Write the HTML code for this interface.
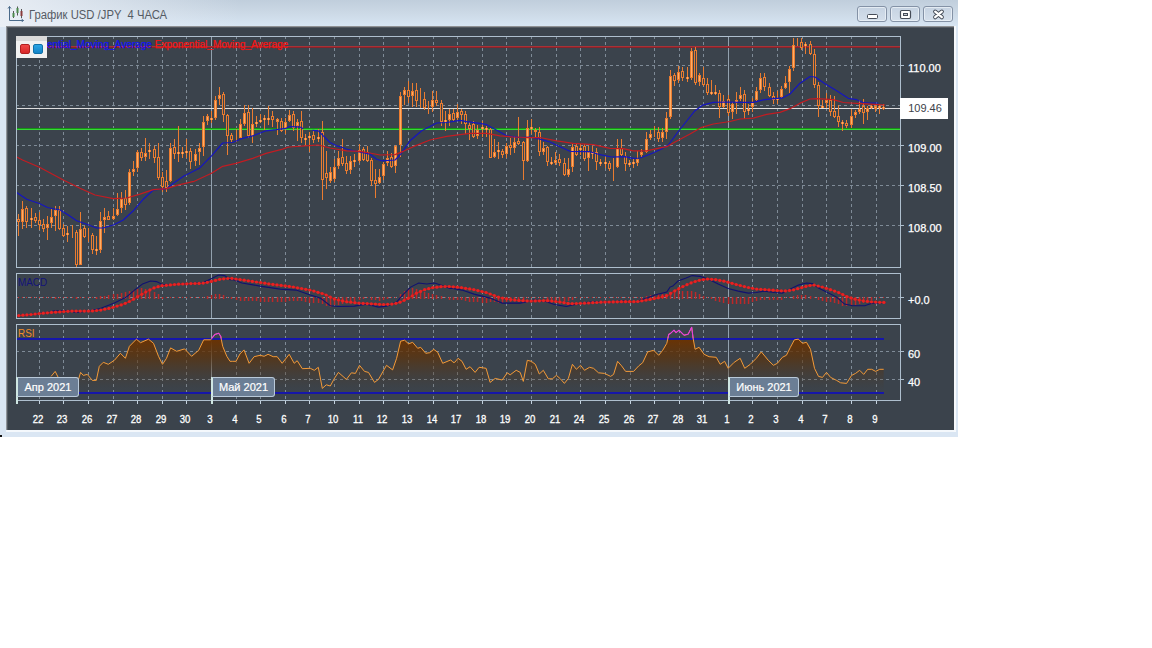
<!DOCTYPE html><html><head><meta charset="utf-8"><title>График USD/JPY</title>
<style>
html,body{margin:0;padding:0;background:#fff;}
body{width:1152px;height:648px;position:relative;overflow:hidden;font-family:"Liberation Sans",sans-serif;}
#win{position:absolute;left:0;top:0;width:958px;height:437px;background:#dae6f3;}
#tb{position:absolute;left:0;top:0;width:958px;height:27px;background:linear-gradient(90deg,rgba(236,240,246,0.9) 0px,rgba(234,239,246,0.7) 60px,rgba(230,237,245,0) 240px),linear-gradient(180deg,#c0cedc 0px,#cbd8e5 12px,#d6e4f2 25px,#dae8f4 27px);}
#inner{position:absolute;left:6px;top:26px;width:948px;height:404px;background:#3b434c;border-top:1px solid #8f9194;border-left:1px solid #8f9499;box-shadow:inset 1px 1px 0 #545a62;box-sizing:border-box;}
#hl{position:absolute;left:6px;top:430px;width:950px;height:2px;background:#f4f8fc}
#hr{position:absolute;left:954px;top:26px;width:2px;height:406px;background:#f6f9fc}
#title{position:absolute;left:28.5px;top:6.8px;font-size:12px;line-height:16px;color:#555b64;white-space:pre;transform:scaleX(0.94);transform-origin:0 0;}
.btn{position:absolute;top:6px;height:14px;border:1px solid #8492a6;border-radius:3px;background:linear-gradient(180deg,#c6d3e2,#d4dfeb);box-shadow:inset 0 0 0 1px rgba(235,241,248,0.8);box-sizing:content-box;}
.ax{position:absolute;left:908px;font-size:11px;line-height:12px;color:#fff;-webkit-text-stroke:0.25px #fff;}
.xl{position:absolute;top:413px;width:30px;text-align:center;font-size:11px;line-height:13px;color:#fff;-webkit-text-stroke:0.3px #fff;transform:scaleX(0.87);}
.mon{position:absolute;top:377px;height:18px;border:1px solid #b9c9d9;border-left:2px solid #cfe6e2;border-radius:0 3px 3px 0;background:#6b7e95;color:#fff;font-size:11px;line-height:18px;text-align:center;box-sizing:content-box;-webkit-text-stroke:0.2px #fff;}
.mont{position:absolute;top:377px;width:2px;height:27px;background:#cfe6e2}
.lg{position:absolute;top:37px;font-size:10.07px;line-height:12px;white-space:pre;-webkit-text-stroke-width:0.25px;}
</style></head><body>
<div id="win"><div id="tb"></div>
<svg style="position:absolute;left:6px;top:4px" width="20" height="18" viewBox="0 0 20 18"><path d="M3.5 2.5V16.5H17.5" fill="none" stroke="#4a6a8a" stroke-width="1"/><path d="M2 4.5L3.5 2.5L5 4.5M15.5 15L17.5 16.5L15.5 18" fill="none" stroke="#4a6a8a" stroke-width="1"/><path d="M7.5 7v7M11.5 2.5v9M15.5 5v9" stroke="#555" stroke-width="1"/><rect x="6.5" y="9" width="2" height="4" fill="#4d8a4d"/><rect x="10.5" y="4" width="2" height="5" fill="#4d8a4d"/><rect x="14.5" y="7" width="2" height="5" fill="#8a3d3d"/></svg>
<div id="title">График USD /JPY  4 ЧАСА</div>
<div class="btn" style="left:857px;width:28px"><svg width="28" height="14"><rect x="9.5" y="7.5" width="10" height="4" rx="1" fill="#fff" stroke="#454c58" stroke-width="1"/></svg></div>
<div class="btn" style="left:890px;width:28px"><svg width="28" height="14"><rect x="9.5" y="3.5" width="10" height="8" rx="1.2" fill="#fff" stroke="#454c58" stroke-width="1.2"/><rect x="12.5" y="6.5" width="4" height="2" fill="#c8ccd4" stroke="#454c58" stroke-width="1"/></svg></div>
<div class="btn" style="left:923px;width:28px"><svg width="28" height="14"><path d="M11.2 4.7L17.8 10.2M17.8 4.7L11.2 10.2" stroke="#454c58" stroke-width="4.2" stroke-linecap="round"/><path d="M11.2 4.7L17.8 10.2M17.8 4.7L11.2 10.2" stroke="#fff" stroke-width="2.3" stroke-linecap="round"/></svg></div>
<div id="inner"></div><div id="hl"></div><div id="hr"></div>
<svg width="958" height="437" viewBox="0 0 958 437" style="position:absolute;left:0;top:0">
<defs>
<linearGradient id="rsig" gradientUnits="userSpaceOnUse" x1="0" y1="339" x2="0" y2="392"><stop offset="0" stop-color="#6a3304" stop-opacity="1"/><stop offset="0.35" stop-color="#5e3208" stop-opacity="0.7"/><stop offset="0.7" stop-color="#523518" stop-opacity="0.3"/><stop offset="1" stop-color="#4a3a28" stop-opacity="0"/></linearGradient>
<clipPath id="cpm"><rect x="17" y="37" width="883" height="230"/></clipPath>
<clipPath id="cpr"><rect x="17" y="325" width="883" height="75"/></clipPath>
<clipPath id="cp70"><rect x="17" y="325" width="883" height="13.6"/></clipPath>
</defs>
<g shape-rendering="crispEdges">
<line x1="39.5" y1="36" x2="39.5" y2="267" stroke="#7f8b97" stroke-width="1" stroke-dasharray="3 3"/>
<line x1="63.5" y1="36" x2="63.5" y2="267" stroke="#7f8b97" stroke-width="1" stroke-dasharray="3 3"/>
<line x1="88.5" y1="36" x2="88.5" y2="267" stroke="#7f8b97" stroke-width="1" stroke-dasharray="3 3"/>
<line x1="113.5" y1="36" x2="113.5" y2="267" stroke="#7f8b97" stroke-width="1" stroke-dasharray="3 3"/>
<line x1="137.5" y1="36" x2="137.5" y2="267" stroke="#7f8b97" stroke-width="1" stroke-dasharray="3 3"/>
<line x1="162.5" y1="36" x2="162.5" y2="267" stroke="#7f8b97" stroke-width="1" stroke-dasharray="3 3"/>
<line x1="186.5" y1="36" x2="186.5" y2="267" stroke="#7f8b97" stroke-width="1" stroke-dasharray="3 3"/>
<line x1="211.5" y1="37" x2="211.5" y2="267" stroke="#93a1ae" stroke-width="1"/>
<line x1="236.5" y1="36" x2="236.5" y2="267" stroke="#7f8b97" stroke-width="1" stroke-dasharray="3 3"/>
<line x1="260.5" y1="36" x2="260.5" y2="267" stroke="#7f8b97" stroke-width="1" stroke-dasharray="3 3"/>
<line x1="285.5" y1="36" x2="285.5" y2="267" stroke="#7f8b97" stroke-width="1" stroke-dasharray="3 3"/>
<line x1="309.5" y1="36" x2="309.5" y2="267" stroke="#7f8b97" stroke-width="1" stroke-dasharray="3 3"/>
<line x1="334.5" y1="36" x2="334.5" y2="267" stroke="#7f8b97" stroke-width="1" stroke-dasharray="3 3"/>
<line x1="359.5" y1="36" x2="359.5" y2="267" stroke="#7f8b97" stroke-width="1" stroke-dasharray="3 3"/>
<line x1="383.5" y1="36" x2="383.5" y2="267" stroke="#7f8b97" stroke-width="1" stroke-dasharray="3 3"/>
<line x1="408.5" y1="36" x2="408.5" y2="267" stroke="#7f8b97" stroke-width="1" stroke-dasharray="3 3"/>
<line x1="433.5" y1="36" x2="433.5" y2="267" stroke="#7f8b97" stroke-width="1" stroke-dasharray="3 3"/>
<line x1="457.5" y1="36" x2="457.5" y2="267" stroke="#7f8b97" stroke-width="1" stroke-dasharray="3 3"/>
<line x1="482.5" y1="36" x2="482.5" y2="267" stroke="#7f8b97" stroke-width="1" stroke-dasharray="3 3"/>
<line x1="506.5" y1="36" x2="506.5" y2="267" stroke="#7f8b97" stroke-width="1" stroke-dasharray="3 3"/>
<line x1="531.5" y1="36" x2="531.5" y2="267" stroke="#7f8b97" stroke-width="1" stroke-dasharray="3 3"/>
<line x1="556.5" y1="36" x2="556.5" y2="267" stroke="#7f8b97" stroke-width="1" stroke-dasharray="3 3"/>
<line x1="580.5" y1="36" x2="580.5" y2="267" stroke="#7f8b97" stroke-width="1" stroke-dasharray="3 3"/>
<line x1="605.5" y1="36" x2="605.5" y2="267" stroke="#7f8b97" stroke-width="1" stroke-dasharray="3 3"/>
<line x1="630.5" y1="36" x2="630.5" y2="267" stroke="#7f8b97" stroke-width="1" stroke-dasharray="3 3"/>
<line x1="654.5" y1="36" x2="654.5" y2="267" stroke="#7f8b97" stroke-width="1" stroke-dasharray="3 3"/>
<line x1="679.5" y1="36" x2="679.5" y2="267" stroke="#7f8b97" stroke-width="1" stroke-dasharray="3 3"/>
<line x1="703.5" y1="36" x2="703.5" y2="267" stroke="#7f8b97" stroke-width="1" stroke-dasharray="3 3"/>
<line x1="728.5" y1="37" x2="728.5" y2="267" stroke="#93a1ae" stroke-width="1"/>
<line x1="752.5" y1="36" x2="752.5" y2="267" stroke="#7f8b97" stroke-width="1" stroke-dasharray="3 3"/>
<line x1="777.5" y1="36" x2="777.5" y2="267" stroke="#7f8b97" stroke-width="1" stroke-dasharray="3 3"/>
<line x1="802.5" y1="36" x2="802.5" y2="267" stroke="#7f8b97" stroke-width="1" stroke-dasharray="3 3"/>
<line x1="826.5" y1="36" x2="826.5" y2="267" stroke="#7f8b97" stroke-width="1" stroke-dasharray="3 3"/>
<line x1="851.5" y1="36" x2="851.5" y2="267" stroke="#7f8b97" stroke-width="1" stroke-dasharray="3 3"/>
<line x1="876.5" y1="36" x2="876.5" y2="267" stroke="#7f8b97" stroke-width="1" stroke-dasharray="3 3"/>
<line x1="16" y1="65.5" x2="900" y2="65.5" stroke="#7f8b97" stroke-width="1" stroke-dasharray="3 3"/>
<line x1="16" y1="105.5" x2="900" y2="105.5" stroke="#7f8b97" stroke-width="1" stroke-dasharray="3 3"/>
<line x1="16" y1="145.5" x2="900" y2="145.5" stroke="#7f8b97" stroke-width="1" stroke-dasharray="3 3"/>
<line x1="16" y1="185.5" x2="900" y2="185.5" stroke="#7f8b97" stroke-width="1" stroke-dasharray="3 3"/>
<line x1="16" y1="225.5" x2="900" y2="225.5" stroke="#7f8b97" stroke-width="1" stroke-dasharray="3 3"/>
<line x1="39.5" y1="273" x2="39.5" y2="318" stroke="#7f8b97" stroke-width="1" stroke-dasharray="3 3"/>
<line x1="63.5" y1="273" x2="63.5" y2="318" stroke="#7f8b97" stroke-width="1" stroke-dasharray="3 3"/>
<line x1="88.5" y1="273" x2="88.5" y2="318" stroke="#7f8b97" stroke-width="1" stroke-dasharray="3 3"/>
<line x1="113.5" y1="273" x2="113.5" y2="318" stroke="#7f8b97" stroke-width="1" stroke-dasharray="3 3"/>
<line x1="137.5" y1="273" x2="137.5" y2="318" stroke="#7f8b97" stroke-width="1" stroke-dasharray="3 3"/>
<line x1="162.5" y1="273" x2="162.5" y2="318" stroke="#7f8b97" stroke-width="1" stroke-dasharray="3 3"/>
<line x1="186.5" y1="273" x2="186.5" y2="318" stroke="#7f8b97" stroke-width="1" stroke-dasharray="3 3"/>
<line x1="211.5" y1="274" x2="211.5" y2="318" stroke="#93a1ae" stroke-width="1"/>
<line x1="236.5" y1="273" x2="236.5" y2="318" stroke="#7f8b97" stroke-width="1" stroke-dasharray="3 3"/>
<line x1="260.5" y1="273" x2="260.5" y2="318" stroke="#7f8b97" stroke-width="1" stroke-dasharray="3 3"/>
<line x1="285.5" y1="273" x2="285.5" y2="318" stroke="#7f8b97" stroke-width="1" stroke-dasharray="3 3"/>
<line x1="309.5" y1="273" x2="309.5" y2="318" stroke="#7f8b97" stroke-width="1" stroke-dasharray="3 3"/>
<line x1="334.5" y1="273" x2="334.5" y2="318" stroke="#7f8b97" stroke-width="1" stroke-dasharray="3 3"/>
<line x1="359.5" y1="273" x2="359.5" y2="318" stroke="#7f8b97" stroke-width="1" stroke-dasharray="3 3"/>
<line x1="383.5" y1="273" x2="383.5" y2="318" stroke="#7f8b97" stroke-width="1" stroke-dasharray="3 3"/>
<line x1="408.5" y1="273" x2="408.5" y2="318" stroke="#7f8b97" stroke-width="1" stroke-dasharray="3 3"/>
<line x1="433.5" y1="273" x2="433.5" y2="318" stroke="#7f8b97" stroke-width="1" stroke-dasharray="3 3"/>
<line x1="457.5" y1="273" x2="457.5" y2="318" stroke="#7f8b97" stroke-width="1" stroke-dasharray="3 3"/>
<line x1="482.5" y1="273" x2="482.5" y2="318" stroke="#7f8b97" stroke-width="1" stroke-dasharray="3 3"/>
<line x1="506.5" y1="273" x2="506.5" y2="318" stroke="#7f8b97" stroke-width="1" stroke-dasharray="3 3"/>
<line x1="531.5" y1="273" x2="531.5" y2="318" stroke="#7f8b97" stroke-width="1" stroke-dasharray="3 3"/>
<line x1="556.5" y1="273" x2="556.5" y2="318" stroke="#7f8b97" stroke-width="1" stroke-dasharray="3 3"/>
<line x1="580.5" y1="273" x2="580.5" y2="318" stroke="#7f8b97" stroke-width="1" stroke-dasharray="3 3"/>
<line x1="605.5" y1="273" x2="605.5" y2="318" stroke="#7f8b97" stroke-width="1" stroke-dasharray="3 3"/>
<line x1="630.5" y1="273" x2="630.5" y2="318" stroke="#7f8b97" stroke-width="1" stroke-dasharray="3 3"/>
<line x1="654.5" y1="273" x2="654.5" y2="318" stroke="#7f8b97" stroke-width="1" stroke-dasharray="3 3"/>
<line x1="679.5" y1="273" x2="679.5" y2="318" stroke="#7f8b97" stroke-width="1" stroke-dasharray="3 3"/>
<line x1="703.5" y1="273" x2="703.5" y2="318" stroke="#7f8b97" stroke-width="1" stroke-dasharray="3 3"/>
<line x1="728.5" y1="274" x2="728.5" y2="318" stroke="#93a1ae" stroke-width="1"/>
<line x1="752.5" y1="273" x2="752.5" y2="318" stroke="#7f8b97" stroke-width="1" stroke-dasharray="3 3"/>
<line x1="777.5" y1="273" x2="777.5" y2="318" stroke="#7f8b97" stroke-width="1" stroke-dasharray="3 3"/>
<line x1="802.5" y1="273" x2="802.5" y2="318" stroke="#7f8b97" stroke-width="1" stroke-dasharray="3 3"/>
<line x1="826.5" y1="273" x2="826.5" y2="318" stroke="#7f8b97" stroke-width="1" stroke-dasharray="3 3"/>
<line x1="851.5" y1="273" x2="851.5" y2="318" stroke="#7f8b97" stroke-width="1" stroke-dasharray="3 3"/>
<line x1="876.5" y1="273" x2="876.5" y2="318" stroke="#7f8b97" stroke-width="1" stroke-dasharray="3 3"/>
<line x1="16" y1="297.5" x2="900" y2="297.5" stroke="#7f8b97" stroke-width="1" stroke-dasharray="3 3"/>
<line x1="39.5" y1="324" x2="39.5" y2="400" stroke="#7f8b97" stroke-width="1" stroke-dasharray="3 3"/>
<line x1="63.5" y1="324" x2="63.5" y2="400" stroke="#7f8b97" stroke-width="1" stroke-dasharray="3 3"/>
<line x1="88.5" y1="324" x2="88.5" y2="400" stroke="#7f8b97" stroke-width="1" stroke-dasharray="3 3"/>
<line x1="113.5" y1="324" x2="113.5" y2="400" stroke="#7f8b97" stroke-width="1" stroke-dasharray="3 3"/>
<line x1="137.5" y1="324" x2="137.5" y2="400" stroke="#7f8b97" stroke-width="1" stroke-dasharray="3 3"/>
<line x1="162.5" y1="324" x2="162.5" y2="400" stroke="#7f8b97" stroke-width="1" stroke-dasharray="3 3"/>
<line x1="186.5" y1="324" x2="186.5" y2="400" stroke="#7f8b97" stroke-width="1" stroke-dasharray="3 3"/>
<line x1="211.5" y1="325" x2="211.5" y2="400" stroke="#93a1ae" stroke-width="1"/>
<line x1="236.5" y1="324" x2="236.5" y2="400" stroke="#7f8b97" stroke-width="1" stroke-dasharray="3 3"/>
<line x1="260.5" y1="324" x2="260.5" y2="400" stroke="#7f8b97" stroke-width="1" stroke-dasharray="3 3"/>
<line x1="285.5" y1="324" x2="285.5" y2="400" stroke="#7f8b97" stroke-width="1" stroke-dasharray="3 3"/>
<line x1="309.5" y1="324" x2="309.5" y2="400" stroke="#7f8b97" stroke-width="1" stroke-dasharray="3 3"/>
<line x1="334.5" y1="324" x2="334.5" y2="400" stroke="#7f8b97" stroke-width="1" stroke-dasharray="3 3"/>
<line x1="359.5" y1="324" x2="359.5" y2="400" stroke="#7f8b97" stroke-width="1" stroke-dasharray="3 3"/>
<line x1="383.5" y1="324" x2="383.5" y2="400" stroke="#7f8b97" stroke-width="1" stroke-dasharray="3 3"/>
<line x1="408.5" y1="324" x2="408.5" y2="400" stroke="#7f8b97" stroke-width="1" stroke-dasharray="3 3"/>
<line x1="433.5" y1="324" x2="433.5" y2="400" stroke="#7f8b97" stroke-width="1" stroke-dasharray="3 3"/>
<line x1="457.5" y1="324" x2="457.5" y2="400" stroke="#7f8b97" stroke-width="1" stroke-dasharray="3 3"/>
<line x1="482.5" y1="324" x2="482.5" y2="400" stroke="#7f8b97" stroke-width="1" stroke-dasharray="3 3"/>
<line x1="506.5" y1="324" x2="506.5" y2="400" stroke="#7f8b97" stroke-width="1" stroke-dasharray="3 3"/>
<line x1="531.5" y1="324" x2="531.5" y2="400" stroke="#7f8b97" stroke-width="1" stroke-dasharray="3 3"/>
<line x1="556.5" y1="324" x2="556.5" y2="400" stroke="#7f8b97" stroke-width="1" stroke-dasharray="3 3"/>
<line x1="580.5" y1="324" x2="580.5" y2="400" stroke="#7f8b97" stroke-width="1" stroke-dasharray="3 3"/>
<line x1="605.5" y1="324" x2="605.5" y2="400" stroke="#7f8b97" stroke-width="1" stroke-dasharray="3 3"/>
<line x1="630.5" y1="324" x2="630.5" y2="400" stroke="#7f8b97" stroke-width="1" stroke-dasharray="3 3"/>
<line x1="654.5" y1="324" x2="654.5" y2="400" stroke="#7f8b97" stroke-width="1" stroke-dasharray="3 3"/>
<line x1="679.5" y1="324" x2="679.5" y2="400" stroke="#7f8b97" stroke-width="1" stroke-dasharray="3 3"/>
<line x1="703.5" y1="324" x2="703.5" y2="400" stroke="#7f8b97" stroke-width="1" stroke-dasharray="3 3"/>
<line x1="728.5" y1="325" x2="728.5" y2="400" stroke="#93a1ae" stroke-width="1"/>
<line x1="752.5" y1="324" x2="752.5" y2="400" stroke="#7f8b97" stroke-width="1" stroke-dasharray="3 3"/>
<line x1="777.5" y1="324" x2="777.5" y2="400" stroke="#7f8b97" stroke-width="1" stroke-dasharray="3 3"/>
<line x1="802.5" y1="324" x2="802.5" y2="400" stroke="#7f8b97" stroke-width="1" stroke-dasharray="3 3"/>
<line x1="826.5" y1="324" x2="826.5" y2="400" stroke="#7f8b97" stroke-width="1" stroke-dasharray="3 3"/>
<line x1="851.5" y1="324" x2="851.5" y2="400" stroke="#7f8b97" stroke-width="1" stroke-dasharray="3 3"/>
<line x1="876.5" y1="324" x2="876.5" y2="400" stroke="#7f8b97" stroke-width="1" stroke-dasharray="3 3"/>
<line x1="16" y1="351.5" x2="900" y2="351.5" stroke="#7f8b97" stroke-width="1" stroke-dasharray="3 3"/>
<line x1="16" y1="379.5" x2="900" y2="379.5" stroke="#7f8b97" stroke-width="1" stroke-dasharray="3 3"/>
</g>
<rect x="17" y="46" width="884" height="1" fill="#a83236"/><rect x="17" y="47" width="884" height="1" fill="#86222b"/>
<rect x="17" y="108" width="884" height="1" fill="#dedede"/>
<rect x="17" y="128" width="884" height="1" fill="#169216"/><rect x="17" y="129" width="884" height="1" fill="#38d838"/>
<g clip-path="url(#cpm)" shape-rendering="crispEdges">
<rect x="18" y="214" width="1" height="22" fill="#ea7c30"/>
<rect x="17" y="219" width="3" height="3" fill="#ea7c30"/>
<rect x="18" y="220" width="1" height="1" fill="#3b434c"/>
<rect x="22" y="201" width="1" height="28" fill="#ea7c30"/>
<rect x="21" y="209" width="3" height="13" fill="#ea7c30"/>
<rect x="22" y="210" width="1" height="11" fill="#ffae66"/>
<rect x="26" y="206" width="1" height="22" fill="#ea7c30"/>
<rect x="25" y="208" width="3" height="14" fill="#ea7c30"/>
<rect x="26" y="209" width="1" height="12" fill="#3b434c"/>
<rect x="31" y="208" width="1" height="20" fill="#ea7c30"/>
<rect x="30" y="218" width="3" height="2" fill="#ea7c30"/>
<rect x="31" y="218" width="1" height="2" fill="#ffae66"/>
<rect x="35" y="213" width="1" height="10" fill="#ea7c30"/>
<rect x="34" y="217" width="3" height="4" fill="#ea7c30"/>
<rect x="35" y="218" width="1" height="2" fill="#3b434c"/>
<rect x="39" y="212" width="1" height="18" fill="#ea7c30"/>
<rect x="38" y="220" width="3" height="5" fill="#ea7c30"/>
<rect x="39" y="221" width="1" height="3" fill="#3b434c"/>
<rect x="43" y="219" width="1" height="13" fill="#ea7c30"/>
<rect x="42" y="224" width="3" height="5" fill="#ea7c30"/>
<rect x="43" y="225" width="1" height="3" fill="#3b434c"/>
<rect x="47" y="216" width="1" height="24" fill="#ea7c30"/>
<rect x="46" y="224" width="3" height="4" fill="#ea7c30"/>
<rect x="47" y="225" width="1" height="2" fill="#ffae66"/>
<rect x="51" y="209" width="1" height="19" fill="#ea7c30"/>
<rect x="50" y="217" width="3" height="6" fill="#ea7c30"/>
<rect x="51" y="218" width="1" height="4" fill="#ffae66"/>
<rect x="55" y="206" width="1" height="25" fill="#ea7c30"/>
<rect x="54" y="210" width="3" height="6" fill="#ea7c30"/>
<rect x="55" y="211" width="1" height="4" fill="#ffae66"/>
<rect x="59" y="206" width="1" height="24" fill="#ea7c30"/>
<rect x="58" y="210" width="3" height="19" fill="#ea7c30"/>
<rect x="59" y="211" width="1" height="17" fill="#3b434c"/>
<rect x="63" y="224" width="1" height="13" fill="#ea7c30"/>
<rect x="62" y="228" width="3" height="8" fill="#ea7c30"/>
<rect x="63" y="229" width="1" height="6" fill="#3b434c"/>
<rect x="67" y="226" width="1" height="16" fill="#ea7c30"/>
<rect x="66" y="233" width="3" height="2" fill="#ea7c30"/>
<rect x="67" y="233" width="1" height="2" fill="#ffae66"/>
<rect x="72" y="225" width="1" height="13" fill="#ea7c30"/>
<rect x="76" y="230" width="1" height="37" fill="#ea7c30"/>
<rect x="75" y="232" width="3" height="33" fill="#ea7c30"/>
<rect x="76" y="233" width="1" height="31" fill="#3b434c"/>
<rect x="80" y="212" width="1" height="53" fill="#ea7c30"/>
<rect x="79" y="229" width="3" height="36" fill="#ea7c30"/>
<rect x="80" y="230" width="1" height="34" fill="#ffae66"/>
<rect x="84" y="226" width="1" height="12" fill="#ea7c30"/>
<rect x="83" y="228" width="3" height="9" fill="#ea7c30"/>
<rect x="84" y="229" width="1" height="7" fill="#3b434c"/>
<rect x="88" y="228" width="1" height="14" fill="#ea7c30"/>
<rect x="92" y="233" width="1" height="21" fill="#ea7c30"/>
<rect x="91" y="235" width="3" height="15" fill="#ea7c30"/>
<rect x="92" y="236" width="1" height="13" fill="#3b434c"/>
<rect x="96" y="236" width="1" height="19" fill="#ea7c30"/>
<rect x="95" y="249" width="3" height="2" fill="#ea7c30"/>
<rect x="96" y="249" width="1" height="2" fill="#ffae66"/>
<rect x="100" y="212" width="1" height="41" fill="#ea7c30"/>
<rect x="99" y="221" width="3" height="29" fill="#ea7c30"/>
<rect x="100" y="222" width="1" height="27" fill="#ffae66"/>
<rect x="104" y="208" width="1" height="25" fill="#ea7c30"/>
<rect x="103" y="217" width="3" height="3" fill="#ea7c30"/>
<rect x="104" y="218" width="1" height="1" fill="#ffae66"/>
<rect x="108" y="211" width="1" height="9" fill="#ea7c30"/>
<rect x="107" y="216" width="3" height="4" fill="#ea7c30"/>
<rect x="108" y="217" width="1" height="2" fill="#3b434c"/>
<rect x="113" y="208" width="1" height="12" fill="#ea7c30"/>
<rect x="112" y="216" width="3" height="3" fill="#ea7c30"/>
<rect x="113" y="217" width="1" height="1" fill="#ffae66"/>
<rect x="117" y="193" width="1" height="23" fill="#ea7c30"/>
<rect x="116" y="209" width="3" height="6" fill="#ea7c30"/>
<rect x="117" y="210" width="1" height="4" fill="#ffae66"/>
<rect x="121" y="192" width="1" height="21" fill="#ea7c30"/>
<rect x="120" y="199" width="3" height="9" fill="#ea7c30"/>
<rect x="121" y="200" width="1" height="7" fill="#ffae66"/>
<rect x="125" y="190" width="1" height="20" fill="#ea7c30"/>
<rect x="124" y="198" width="3" height="7" fill="#ea7c30"/>
<rect x="125" y="199" width="1" height="5" fill="#3b434c"/>
<rect x="129" y="169" width="1" height="36" fill="#ea7c30"/>
<rect x="128" y="172" width="3" height="31" fill="#ea7c30"/>
<rect x="129" y="173" width="1" height="29" fill="#ffae66"/>
<rect x="133" y="161" width="1" height="15" fill="#ea7c30"/>
<rect x="132" y="169" width="3" height="3" fill="#ea7c30"/>
<rect x="133" y="170" width="1" height="1" fill="#ffae66"/>
<rect x="137" y="150" width="1" height="22" fill="#ea7c30"/>
<rect x="136" y="152" width="3" height="16" fill="#ea7c30"/>
<rect x="137" y="153" width="1" height="14" fill="#ffae66"/>
<rect x="141" y="148" width="1" height="13" fill="#ea7c30"/>
<rect x="140" y="152" width="3" height="6" fill="#ea7c30"/>
<rect x="141" y="153" width="1" height="4" fill="#3b434c"/>
<rect x="145" y="138" width="1" height="23" fill="#ea7c30"/>
<rect x="144" y="153" width="3" height="4" fill="#ea7c30"/>
<rect x="145" y="154" width="1" height="2" fill="#ffae66"/>
<rect x="149" y="143" width="1" height="16" fill="#ea7c30"/>
<rect x="148" y="150" width="3" height="2" fill="#ea7c30"/>
<rect x="149" y="150" width="1" height="2" fill="#ffae66"/>
<rect x="154" y="146" width="1" height="17" fill="#ea7c30"/>
<rect x="153" y="149" width="3" height="9" fill="#ea7c30"/>
<rect x="154" y="150" width="1" height="7" fill="#3b434c"/>
<rect x="158" y="143" width="1" height="37" fill="#ea7c30"/>
<rect x="157" y="157" width="3" height="21" fill="#ea7c30"/>
<rect x="158" y="158" width="1" height="19" fill="#3b434c"/>
<rect x="162" y="172" width="1" height="20" fill="#ea7c30"/>
<rect x="161" y="177" width="3" height="10" fill="#ea7c30"/>
<rect x="162" y="178" width="1" height="8" fill="#3b434c"/>
<rect x="166" y="170" width="1" height="22" fill="#ea7c30"/>
<rect x="165" y="181" width="3" height="7" fill="#ea7c30"/>
<rect x="166" y="182" width="1" height="5" fill="#3b434c"/>
<rect x="170" y="143" width="1" height="39" fill="#ea7c30"/>
<rect x="169" y="148" width="3" height="33" fill="#ea7c30"/>
<rect x="170" y="149" width="1" height="31" fill="#ffae66"/>
<rect x="174" y="139" width="1" height="20" fill="#ea7c30"/>
<rect x="173" y="147" width="3" height="7" fill="#ea7c30"/>
<rect x="174" y="148" width="1" height="5" fill="#3b434c"/>
<rect x="178" y="126" width="1" height="36" fill="#ea7c30"/>
<rect x="177" y="152" width="3" height="2" fill="#ea7c30"/>
<rect x="178" y="152" width="1" height="2" fill="#ffae66"/>
<rect x="182" y="147" width="1" height="11" fill="#ea7c30"/>
<rect x="181" y="152" width="3" height="2" fill="#ea7c30"/>
<rect x="182" y="152" width="1" height="2" fill="#ffae66"/>
<rect x="186" y="139" width="1" height="19" fill="#ea7c30"/>
<rect x="185" y="151" width="3" height="2" fill="#ea7c30"/>
<rect x="186" y="151" width="1" height="2" fill="#ffae66"/>
<rect x="190" y="148" width="1" height="21" fill="#ea7c30"/>
<rect x="189" y="151" width="3" height="11" fill="#ea7c30"/>
<rect x="190" y="152" width="1" height="9" fill="#3b434c"/>
<rect x="195" y="149" width="1" height="17" fill="#ea7c30"/>
<rect x="194" y="154" width="3" height="7" fill="#ea7c30"/>
<rect x="195" y="155" width="1" height="5" fill="#ffae66"/>
<rect x="199" y="143" width="1" height="22" fill="#ea7c30"/>
<rect x="198" y="148" width="3" height="4" fill="#ea7c30"/>
<rect x="199" y="149" width="1" height="2" fill="#ffae66"/>
<rect x="203" y="116" width="1" height="40" fill="#ea7c30"/>
<rect x="202" y="122" width="3" height="25" fill="#ea7c30"/>
<rect x="203" y="123" width="1" height="23" fill="#ffae66"/>
<rect x="207" y="114" width="1" height="11" fill="#ea7c30"/>
<rect x="206" y="116" width="3" height="5" fill="#ea7c30"/>
<rect x="207" y="117" width="1" height="3" fill="#ffae66"/>
<rect x="211" y="111" width="1" height="12" fill="#ea7c30"/>
<rect x="210" y="118" width="3" height="2" fill="#ea7c30"/>
<rect x="211" y="118" width="1" height="2" fill="#ffae66"/>
<rect x="215" y="96" width="1" height="24" fill="#ea7c30"/>
<rect x="214" y="100" width="3" height="18" fill="#ea7c30"/>
<rect x="215" y="101" width="1" height="16" fill="#ffae66"/>
<rect x="219" y="87" width="1" height="18" fill="#ea7c30"/>
<rect x="218" y="95" width="3" height="4" fill="#ea7c30"/>
<rect x="219" y="96" width="1" height="2" fill="#ffae66"/>
<rect x="223" y="92" width="1" height="30" fill="#ea7c30"/>
<rect x="222" y="94" width="3" height="21" fill="#ea7c30"/>
<rect x="223" y="95" width="1" height="19" fill="#3b434c"/>
<rect x="227" y="114" width="1" height="41" fill="#ea7c30"/>
<rect x="226" y="115" width="3" height="21" fill="#ea7c30"/>
<rect x="227" y="116" width="1" height="19" fill="#3b434c"/>
<rect x="231" y="133" width="1" height="9" fill="#ea7c30"/>
<rect x="230" y="135" width="3" height="5" fill="#ea7c30"/>
<rect x="231" y="136" width="1" height="3" fill="#3b434c"/>
<rect x="236" y="129" width="1" height="13" fill="#ea7c30"/>
<rect x="240" y="119" width="1" height="19" fill="#ea7c30"/>
<rect x="239" y="124" width="3" height="14" fill="#ea7c30"/>
<rect x="240" y="125" width="1" height="12" fill="#ffae66"/>
<rect x="244" y="105" width="1" height="21" fill="#ea7c30"/>
<rect x="243" y="113" width="3" height="11" fill="#ea7c30"/>
<rect x="244" y="114" width="1" height="9" fill="#ffae66"/>
<rect x="248" y="105" width="1" height="33" fill="#ea7c30"/>
<rect x="247" y="112" width="3" height="24" fill="#ea7c30"/>
<rect x="248" y="113" width="1" height="22" fill="#3b434c"/>
<rect x="252" y="108" width="1" height="35" fill="#ea7c30"/>
<rect x="251" y="124" width="3" height="12" fill="#ea7c30"/>
<rect x="252" y="125" width="1" height="10" fill="#ffae66"/>
<rect x="256" y="116" width="1" height="11" fill="#ea7c30"/>
<rect x="255" y="122" width="3" height="2" fill="#ea7c30"/>
<rect x="256" y="122" width="1" height="2" fill="#ffae66"/>
<rect x="260" y="114" width="1" height="9" fill="#ea7c30"/>
<rect x="259" y="120" width="3" height="2" fill="#ea7c30"/>
<rect x="260" y="120" width="1" height="2" fill="#ffae66"/>
<rect x="264" y="115" width="1" height="15" fill="#ea7c30"/>
<rect x="263" y="118" width="3" height="2" fill="#ea7c30"/>
<rect x="264" y="118" width="1" height="2" fill="#ffae66"/>
<rect x="268" y="106" width="1" height="19" fill="#ea7c30"/>
<rect x="267" y="118" width="3" height="2" fill="#ea7c30"/>
<rect x="268" y="118" width="1" height="2" fill="#ffae66"/>
<rect x="272" y="111" width="1" height="16" fill="#ea7c30"/>
<rect x="271" y="116" width="3" height="4" fill="#ea7c30"/>
<rect x="272" y="117" width="1" height="2" fill="#3b434c"/>
<rect x="277" y="118" width="1" height="17" fill="#ea7c30"/>
<rect x="276" y="119" width="3" height="3" fill="#ea7c30"/>
<rect x="277" y="120" width="1" height="1" fill="#ffae66"/>
<rect x="281" y="118" width="1" height="14" fill="#ea7c30"/>
<rect x="280" y="121" width="3" height="10" fill="#ea7c30"/>
<rect x="281" y="122" width="1" height="8" fill="#3b434c"/>
<rect x="285" y="118" width="1" height="16" fill="#ea7c30"/>
<rect x="284" y="122" width="3" height="6" fill="#ea7c30"/>
<rect x="285" y="123" width="1" height="4" fill="#ffae66"/>
<rect x="289" y="110" width="1" height="12" fill="#ea7c30"/>
<rect x="288" y="115" width="3" height="6" fill="#ea7c30"/>
<rect x="289" y="116" width="1" height="4" fill="#ffae66"/>
<rect x="293" y="111" width="1" height="20" fill="#ea7c30"/>
<rect x="292" y="114" width="3" height="14" fill="#ea7c30"/>
<rect x="293" y="115" width="1" height="12" fill="#3b434c"/>
<rect x="297" y="119" width="1" height="22" fill="#ea7c30"/>
<rect x="296" y="122" width="3" height="4" fill="#ea7c30"/>
<rect x="297" y="123" width="1" height="2" fill="#ffae66"/>
<rect x="301" y="111" width="1" height="32" fill="#ea7c30"/>
<rect x="300" y="121" width="3" height="17" fill="#ea7c30"/>
<rect x="301" y="122" width="1" height="15" fill="#3b434c"/>
<rect x="305" y="134" width="1" height="12" fill="#ea7c30"/>
<rect x="304" y="138" width="3" height="2" fill="#ea7c30"/>
<rect x="305" y="138" width="1" height="2" fill="#ffae66"/>
<rect x="309" y="132" width="1" height="20" fill="#ea7c30"/>
<rect x="308" y="136" width="3" height="2" fill="#ea7c30"/>
<rect x="309" y="136" width="1" height="2" fill="#ffae66"/>
<rect x="313" y="131" width="1" height="12" fill="#ea7c30"/>
<rect x="312" y="135" width="3" height="5" fill="#ea7c30"/>
<rect x="313" y="136" width="1" height="3" fill="#3b434c"/>
<rect x="318" y="129" width="1" height="13" fill="#ea7c30"/>
<rect x="317" y="137" width="3" height="2" fill="#ea7c30"/>
<rect x="318" y="137" width="1" height="2" fill="#ffae66"/>
<rect x="322" y="121" width="1" height="79" fill="#ea7c30"/>
<rect x="321" y="132" width="3" height="48" fill="#ea7c30"/>
<rect x="322" y="133" width="1" height="46" fill="#3b434c"/>
<rect x="326" y="151" width="1" height="38" fill="#ea7c30"/>
<rect x="325" y="173" width="3" height="5" fill="#ea7c30"/>
<rect x="326" y="174" width="1" height="3" fill="#3b434c"/>
<rect x="330" y="167" width="1" height="16" fill="#ea7c30"/>
<rect x="329" y="172" width="3" height="9" fill="#ea7c30"/>
<rect x="330" y="173" width="1" height="7" fill="#ffae66"/>
<rect x="334" y="159" width="1" height="23" fill="#ea7c30"/>
<rect x="333" y="167" width="3" height="12" fill="#ea7c30"/>
<rect x="334" y="168" width="1" height="10" fill="#ffae66"/>
<rect x="338" y="151" width="1" height="18" fill="#ea7c30"/>
<rect x="337" y="158" width="3" height="8" fill="#ea7c30"/>
<rect x="338" y="159" width="1" height="6" fill="#ffae66"/>
<rect x="342" y="139" width="1" height="27" fill="#ea7c30"/>
<rect x="341" y="157" width="3" height="7" fill="#ea7c30"/>
<rect x="342" y="158" width="1" height="5" fill="#3b434c"/>
<rect x="346" y="156" width="1" height="18" fill="#ea7c30"/>
<rect x="345" y="163" width="3" height="8" fill="#ea7c30"/>
<rect x="346" y="164" width="1" height="6" fill="#3b434c"/>
<rect x="350" y="156" width="1" height="18" fill="#ea7c30"/>
<rect x="349" y="161" width="3" height="9" fill="#ea7c30"/>
<rect x="350" y="162" width="1" height="7" fill="#ffae66"/>
<rect x="354" y="154" width="1" height="13" fill="#ea7c30"/>
<rect x="353" y="160" width="3" height="2" fill="#ea7c30"/>
<rect x="354" y="160" width="1" height="2" fill="#ffae66"/>
<rect x="359" y="144" width="1" height="19" fill="#ea7c30"/>
<rect x="358" y="150" width="3" height="11" fill="#ea7c30"/>
<rect x="359" y="151" width="1" height="9" fill="#ffae66"/>
<rect x="363" y="147" width="1" height="14" fill="#ea7c30"/>
<rect x="362" y="149" width="3" height="11" fill="#ea7c30"/>
<rect x="363" y="150" width="1" height="9" fill="#3b434c"/>
<rect x="367" y="146" width="1" height="16" fill="#ea7c30"/>
<rect x="366" y="152" width="3" height="9" fill="#ea7c30"/>
<rect x="367" y="153" width="1" height="7" fill="#3b434c"/>
<rect x="371" y="158" width="1" height="28" fill="#ea7c30"/>
<rect x="370" y="160" width="3" height="21" fill="#ea7c30"/>
<rect x="371" y="161" width="1" height="19" fill="#3b434c"/>
<rect x="375" y="169" width="1" height="29" fill="#ea7c30"/>
<rect x="374" y="180" width="3" height="4" fill="#ea7c30"/>
<rect x="375" y="181" width="1" height="2" fill="#3b434c"/>
<rect x="379" y="169" width="1" height="15" fill="#ea7c30"/>
<rect x="378" y="177" width="3" height="6" fill="#ea7c30"/>
<rect x="379" y="178" width="1" height="4" fill="#ffae66"/>
<rect x="383" y="162" width="1" height="18" fill="#ea7c30"/>
<rect x="382" y="164" width="3" height="12" fill="#ea7c30"/>
<rect x="383" y="165" width="1" height="10" fill="#ffae66"/>
<rect x="387" y="151" width="1" height="15" fill="#ea7c30"/>
<rect x="386" y="158" width="3" height="5" fill="#ea7c30"/>
<rect x="387" y="159" width="1" height="3" fill="#ffae66"/>
<rect x="391" y="153" width="1" height="15" fill="#ea7c30"/>
<rect x="390" y="157" width="3" height="10" fill="#ea7c30"/>
<rect x="391" y="158" width="1" height="8" fill="#3b434c"/>
<rect x="395" y="145" width="1" height="28" fill="#ea7c30"/>
<rect x="394" y="146" width="3" height="20" fill="#ea7c30"/>
<rect x="395" y="147" width="1" height="18" fill="#ffae66"/>
<rect x="400" y="92" width="1" height="65" fill="#ea7c30"/>
<rect x="399" y="96" width="3" height="49" fill="#ea7c30"/>
<rect x="400" y="97" width="1" height="47" fill="#ffae66"/>
<rect x="404" y="87" width="1" height="18" fill="#ea7c30"/>
<rect x="403" y="90" width="3" height="5" fill="#ea7c30"/>
<rect x="404" y="91" width="1" height="3" fill="#ffae66"/>
<rect x="408" y="81" width="1" height="22" fill="#ea7c30"/>
<rect x="407" y="90" width="3" height="7" fill="#ea7c30"/>
<rect x="408" y="91" width="1" height="5" fill="#3b434c"/>
<rect x="412" y="83" width="1" height="24" fill="#ea7c30"/>
<rect x="411" y="91" width="3" height="5" fill="#ea7c30"/>
<rect x="412" y="92" width="1" height="3" fill="#ffae66"/>
<rect x="416" y="83" width="1" height="24" fill="#ea7c30"/>
<rect x="415" y="90" width="3" height="11" fill="#ea7c30"/>
<rect x="416" y="91" width="1" height="9" fill="#3b434c"/>
<rect x="420" y="88" width="1" height="20" fill="#ea7c30"/>
<rect x="424" y="92" width="1" height="18" fill="#ea7c30"/>
<rect x="423" y="99" width="3" height="9" fill="#ea7c30"/>
<rect x="424" y="100" width="1" height="7" fill="#3b434c"/>
<rect x="428" y="101" width="1" height="13" fill="#ea7c30"/>
<rect x="432" y="91" width="1" height="21" fill="#ea7c30"/>
<rect x="431" y="100" width="3" height="7" fill="#ea7c30"/>
<rect x="432" y="101" width="1" height="5" fill="#ffae66"/>
<rect x="436" y="91" width="1" height="15" fill="#ea7c30"/>
<rect x="435" y="100" width="3" height="3" fill="#ea7c30"/>
<rect x="436" y="101" width="1" height="1" fill="#3b434c"/>
<rect x="441" y="100" width="1" height="26" fill="#ea7c30"/>
<rect x="440" y="103" width="3" height="19" fill="#ea7c30"/>
<rect x="441" y="104" width="1" height="17" fill="#3b434c"/>
<rect x="445" y="111" width="1" height="20" fill="#ea7c30"/>
<rect x="444" y="120" width="3" height="2" fill="#ea7c30"/>
<rect x="445" y="120" width="1" height="2" fill="#ffae66"/>
<rect x="449" y="109" width="1" height="17" fill="#ea7c30"/>
<rect x="448" y="114" width="3" height="6" fill="#ea7c30"/>
<rect x="449" y="115" width="1" height="4" fill="#ffae66"/>
<rect x="453" y="109" width="1" height="12" fill="#ea7c30"/>
<rect x="452" y="113" width="3" height="7" fill="#ea7c30"/>
<rect x="453" y="114" width="1" height="5" fill="#3b434c"/>
<rect x="457" y="104" width="1" height="16" fill="#ea7c30"/>
<rect x="456" y="112" width="3" height="6" fill="#ea7c30"/>
<rect x="457" y="113" width="1" height="4" fill="#ffae66"/>
<rect x="461" y="109" width="1" height="15" fill="#ea7c30"/>
<rect x="460" y="111" width="3" height="4" fill="#ea7c30"/>
<rect x="461" y="112" width="1" height="2" fill="#3b434c"/>
<rect x="465" y="111" width="1" height="23" fill="#ea7c30"/>
<rect x="464" y="114" width="3" height="10" fill="#ea7c30"/>
<rect x="465" y="115" width="1" height="8" fill="#3b434c"/>
<rect x="469" y="122" width="1" height="18" fill="#ea7c30"/>
<rect x="468" y="125" width="3" height="4" fill="#ea7c30"/>
<rect x="469" y="126" width="1" height="2" fill="#3b434c"/>
<rect x="473" y="121" width="1" height="17" fill="#ea7c30"/>
<rect x="472" y="124" width="3" height="13" fill="#ea7c30"/>
<rect x="473" y="125" width="1" height="11" fill="#3b434c"/>
<rect x="477" y="125" width="1" height="14" fill="#ea7c30"/>
<rect x="476" y="130" width="3" height="6" fill="#ea7c30"/>
<rect x="477" y="131" width="1" height="4" fill="#ffae66"/>
<rect x="482" y="121" width="1" height="16" fill="#ea7c30"/>
<rect x="481" y="127" width="3" height="2" fill="#ea7c30"/>
<rect x="482" y="127" width="1" height="2" fill="#ffae66"/>
<rect x="486" y="126" width="1" height="11" fill="#ea7c30"/>
<rect x="485" y="128" width="3" height="2" fill="#ea7c30"/>
<rect x="486" y="128" width="1" height="2" fill="#ffae66"/>
<rect x="490" y="128" width="1" height="30" fill="#ea7c30"/>
<rect x="489" y="129" width="3" height="29" fill="#ea7c30"/>
<rect x="490" y="130" width="1" height="27" fill="#3b434c"/>
<rect x="494" y="139" width="1" height="19" fill="#ea7c30"/>
<rect x="493" y="152" width="3" height="5" fill="#ea7c30"/>
<rect x="494" y="153" width="1" height="3" fill="#ffae66"/>
<rect x="498" y="142" width="1" height="17" fill="#ea7c30"/>
<rect x="497" y="150" width="3" height="2" fill="#ea7c30"/>
<rect x="498" y="150" width="1" height="2" fill="#ffae66"/>
<rect x="502" y="149" width="1" height="9" fill="#ea7c30"/>
<rect x="501" y="151" width="3" height="4" fill="#ea7c30"/>
<rect x="502" y="152" width="1" height="2" fill="#3b434c"/>
<rect x="506" y="143" width="1" height="15" fill="#ea7c30"/>
<rect x="505" y="146" width="3" height="8" fill="#ea7c30"/>
<rect x="506" y="147" width="1" height="6" fill="#ffae66"/>
<rect x="510" y="138" width="1" height="17" fill="#ea7c30"/>
<rect x="509" y="145" width="3" height="3" fill="#ea7c30"/>
<rect x="510" y="146" width="1" height="1" fill="#3b434c"/>
<rect x="514" y="136" width="1" height="17" fill="#ea7c30"/>
<rect x="513" y="142" width="3" height="6" fill="#ea7c30"/>
<rect x="514" y="143" width="1" height="4" fill="#ffae66"/>
<rect x="518" y="117" width="1" height="28" fill="#ea7c30"/>
<rect x="517" y="141" width="3" height="3" fill="#ea7c30"/>
<rect x="518" y="142" width="1" height="1" fill="#3b434c"/>
<rect x="523" y="141" width="1" height="39" fill="#ea7c30"/>
<rect x="522" y="142" width="3" height="19" fill="#ea7c30"/>
<rect x="523" y="143" width="1" height="17" fill="#3b434c"/>
<rect x="527" y="120" width="1" height="42" fill="#ea7c30"/>
<rect x="526" y="128" width="3" height="33" fill="#ea7c30"/>
<rect x="527" y="129" width="1" height="31" fill="#ffae66"/>
<rect x="531" y="119" width="1" height="15" fill="#ea7c30"/>
<rect x="530" y="127" width="3" height="2" fill="#ea7c30"/>
<rect x="531" y="127" width="1" height="2" fill="#ffae66"/>
<rect x="535" y="128" width="1" height="10" fill="#ea7c30"/>
<rect x="534" y="130" width="3" height="2" fill="#ea7c30"/>
<rect x="539" y="127" width="1" height="29" fill="#ea7c30"/>
<rect x="538" y="132" width="3" height="20" fill="#ea7c30"/>
<rect x="539" y="133" width="1" height="18" fill="#3b434c"/>
<rect x="543" y="142" width="1" height="13" fill="#ea7c30"/>
<rect x="542" y="148" width="3" height="4" fill="#ea7c30"/>
<rect x="543" y="149" width="1" height="2" fill="#ffae66"/>
<rect x="547" y="146" width="1" height="20" fill="#ea7c30"/>
<rect x="546" y="147" width="3" height="15" fill="#ea7c30"/>
<rect x="547" y="148" width="1" height="13" fill="#3b434c"/>
<rect x="551" y="157" width="1" height="8" fill="#ea7c30"/>
<rect x="550" y="162" width="3" height="2" fill="#ea7c30"/>
<rect x="551" y="162" width="1" height="2" fill="#ffae66"/>
<rect x="555" y="152" width="1" height="13" fill="#ea7c30"/>
<rect x="554" y="160" width="3" height="3" fill="#ea7c30"/>
<rect x="555" y="161" width="1" height="1" fill="#ffae66"/>
<rect x="559" y="154" width="1" height="12" fill="#ea7c30"/>
<rect x="558" y="159" width="3" height="4" fill="#ea7c30"/>
<rect x="559" y="160" width="1" height="2" fill="#3b434c"/>
<rect x="564" y="158" width="1" height="18" fill="#ea7c30"/>
<rect x="563" y="163" width="3" height="12" fill="#ea7c30"/>
<rect x="564" y="164" width="1" height="10" fill="#3b434c"/>
<rect x="568" y="158" width="1" height="19" fill="#ea7c30"/>
<rect x="567" y="169" width="3" height="6" fill="#ea7c30"/>
<rect x="568" y="170" width="1" height="4" fill="#ffae66"/>
<rect x="572" y="144" width="1" height="28" fill="#ea7c30"/>
<rect x="571" y="147" width="3" height="20" fill="#ea7c30"/>
<rect x="572" y="148" width="1" height="18" fill="#ffae66"/>
<rect x="576" y="143" width="1" height="13" fill="#ea7c30"/>
<rect x="575" y="146" width="3" height="9" fill="#ea7c30"/>
<rect x="576" y="147" width="1" height="7" fill="#3b434c"/>
<rect x="580" y="144" width="1" height="11" fill="#ea7c30"/>
<rect x="579" y="148" width="3" height="2" fill="#ea7c30"/>
<rect x="580" y="148" width="1" height="2" fill="#ffae66"/>
<rect x="584" y="144" width="1" height="17" fill="#ea7c30"/>
<rect x="583" y="146" width="3" height="13" fill="#ea7c30"/>
<rect x="584" y="147" width="1" height="11" fill="#3b434c"/>
<rect x="588" y="146" width="1" height="25" fill="#ea7c30"/>
<rect x="587" y="152" width="3" height="6" fill="#ea7c30"/>
<rect x="588" y="153" width="1" height="4" fill="#ffae66"/>
<rect x="592" y="146" width="1" height="13" fill="#ea7c30"/>
<rect x="591" y="152" width="3" height="2" fill="#ea7c30"/>
<rect x="592" y="152" width="1" height="2" fill="#ffae66"/>
<rect x="596" y="148" width="1" height="22" fill="#ea7c30"/>
<rect x="595" y="152" width="3" height="10" fill="#ea7c30"/>
<rect x="596" y="153" width="1" height="8" fill="#3b434c"/>
<rect x="600" y="159" width="1" height="7" fill="#ea7c30"/>
<rect x="599" y="162" width="3" height="2" fill="#ea7c30"/>
<rect x="600" y="162" width="1" height="2" fill="#ffae66"/>
<rect x="605" y="157" width="1" height="11" fill="#ea7c30"/>
<rect x="604" y="162" width="3" height="2" fill="#ea7c30"/>
<rect x="605" y="162" width="1" height="2" fill="#ffae66"/>
<rect x="609" y="161" width="1" height="10" fill="#ea7c30"/>
<rect x="608" y="163" width="3" height="6" fill="#ea7c30"/>
<rect x="609" y="164" width="1" height="4" fill="#3b434c"/>
<rect x="613" y="158" width="1" height="23" fill="#ea7c30"/>
<rect x="617" y="139" width="1" height="29" fill="#ea7c30"/>
<rect x="616" y="148" width="3" height="19" fill="#ea7c30"/>
<rect x="617" y="149" width="1" height="17" fill="#ffae66"/>
<rect x="621" y="139" width="1" height="17" fill="#ea7c30"/>
<rect x="620" y="148" width="3" height="7" fill="#ea7c30"/>
<rect x="621" y="149" width="1" height="5" fill="#3b434c"/>
<rect x="625" y="152" width="1" height="19" fill="#ea7c30"/>
<rect x="624" y="156" width="3" height="8" fill="#ea7c30"/>
<rect x="625" y="157" width="1" height="6" fill="#3b434c"/>
<rect x="629" y="160" width="1" height="7" fill="#ea7c30"/>
<rect x="628" y="163" width="3" height="2" fill="#ea7c30"/>
<rect x="629" y="163" width="1" height="2" fill="#ffae66"/>
<rect x="633" y="159" width="1" height="9" fill="#ea7c30"/>
<rect x="632" y="162" width="3" height="2" fill="#ea7c30"/>
<rect x="633" y="162" width="1" height="2" fill="#ffae66"/>
<rect x="637" y="151" width="1" height="15" fill="#ea7c30"/>
<rect x="636" y="159" width="3" height="4" fill="#ea7c30"/>
<rect x="637" y="160" width="1" height="2" fill="#ffae66"/>
<rect x="641" y="149" width="1" height="8" fill="#ea7c30"/>
<rect x="640" y="152" width="3" height="3" fill="#ea7c30"/>
<rect x="641" y="153" width="1" height="1" fill="#ffae66"/>
<rect x="646" y="132" width="1" height="21" fill="#ea7c30"/>
<rect x="645" y="139" width="3" height="13" fill="#ea7c30"/>
<rect x="646" y="140" width="1" height="11" fill="#ffae66"/>
<rect x="650" y="130" width="1" height="10" fill="#ea7c30"/>
<rect x="649" y="134" width="3" height="4" fill="#ea7c30"/>
<rect x="650" y="135" width="1" height="2" fill="#ffae66"/>
<rect x="654" y="126" width="1" height="11" fill="#ea7c30"/>
<rect x="658" y="127" width="1" height="15" fill="#ea7c30"/>
<rect x="657" y="132" width="3" height="7" fill="#ea7c30"/>
<rect x="658" y="133" width="1" height="5" fill="#3b434c"/>
<rect x="662" y="128" width="1" height="14" fill="#ea7c30"/>
<rect x="661" y="132" width="3" height="6" fill="#ea7c30"/>
<rect x="662" y="133" width="1" height="4" fill="#ffae66"/>
<rect x="666" y="112" width="1" height="27" fill="#ea7c30"/>
<rect x="665" y="118" width="3" height="14" fill="#ea7c30"/>
<rect x="666" y="119" width="1" height="12" fill="#ffae66"/>
<rect x="670" y="70" width="1" height="49" fill="#ea7c30"/>
<rect x="669" y="76" width="3" height="41" fill="#ea7c30"/>
<rect x="670" y="77" width="1" height="39" fill="#ffae66"/>
<rect x="674" y="73" width="1" height="13" fill="#ea7c30"/>
<rect x="673" y="75" width="3" height="6" fill="#ea7c30"/>
<rect x="674" y="76" width="1" height="4" fill="#3b434c"/>
<rect x="678" y="66" width="1" height="17" fill="#ea7c30"/>
<rect x="677" y="72" width="3" height="8" fill="#ea7c30"/>
<rect x="678" y="73" width="1" height="6" fill="#ffae66"/>
<rect x="682" y="67" width="1" height="14" fill="#ea7c30"/>
<rect x="681" y="71" width="3" height="7" fill="#ea7c30"/>
<rect x="682" y="72" width="1" height="5" fill="#3b434c"/>
<rect x="687" y="67" width="1" height="15" fill="#ea7c30"/>
<rect x="686" y="77" width="3" height="2" fill="#ea7c30"/>
<rect x="687" y="77" width="1" height="2" fill="#ffae66"/>
<rect x="691" y="48" width="1" height="32" fill="#ea7c30"/>
<rect x="690" y="51" width="3" height="27" fill="#ea7c30"/>
<rect x="691" y="52" width="1" height="25" fill="#ffae66"/>
<rect x="695" y="47" width="1" height="38" fill="#ea7c30"/>
<rect x="694" y="50" width="3" height="33" fill="#ea7c30"/>
<rect x="695" y="51" width="1" height="31" fill="#3b434c"/>
<rect x="699" y="73" width="1" height="13" fill="#ea7c30"/>
<rect x="698" y="75" width="3" height="7" fill="#ea7c30"/>
<rect x="699" y="76" width="1" height="5" fill="#ffae66"/>
<rect x="703" y="67" width="1" height="19" fill="#ea7c30"/>
<rect x="702" y="78" width="3" height="7" fill="#ea7c30"/>
<rect x="703" y="79" width="1" height="5" fill="#3b434c"/>
<rect x="707" y="78" width="1" height="17" fill="#ea7c30"/>
<rect x="706" y="84" width="3" height="9" fill="#ea7c30"/>
<rect x="707" y="85" width="1" height="7" fill="#3b434c"/>
<rect x="711" y="80" width="1" height="15" fill="#ea7c30"/>
<rect x="710" y="92" width="3" height="2" fill="#ea7c30"/>
<rect x="711" y="92" width="1" height="2" fill="#ffae66"/>
<rect x="715" y="85" width="1" height="10" fill="#ea7c30"/>
<rect x="714" y="92" width="3" height="2" fill="#ea7c30"/>
<rect x="715" y="92" width="1" height="2" fill="#ffae66"/>
<rect x="719" y="90" width="1" height="28" fill="#ea7c30"/>
<rect x="718" y="93" width="3" height="14" fill="#ea7c30"/>
<rect x="719" y="94" width="1" height="12" fill="#3b434c"/>
<rect x="723" y="95" width="1" height="13" fill="#ea7c30"/>
<rect x="722" y="101" width="3" height="6" fill="#ea7c30"/>
<rect x="723" y="102" width="1" height="4" fill="#ffae66"/>
<rect x="728" y="95" width="1" height="21" fill="#ea7c30"/>
<rect x="727" y="99" width="3" height="14" fill="#ea7c30"/>
<rect x="728" y="100" width="1" height="12" fill="#3b434c"/>
<rect x="732" y="102" width="1" height="17" fill="#ea7c30"/>
<rect x="731" y="104" width="3" height="8" fill="#ea7c30"/>
<rect x="732" y="105" width="1" height="6" fill="#ffae66"/>
<rect x="736" y="92" width="1" height="22" fill="#ea7c30"/>
<rect x="735" y="100" width="3" height="3" fill="#ea7c30"/>
<rect x="736" y="101" width="1" height="1" fill="#ffae66"/>
<rect x="740" y="87" width="1" height="14" fill="#ea7c30"/>
<rect x="739" y="95" width="3" height="4" fill="#ea7c30"/>
<rect x="740" y="96" width="1" height="2" fill="#ffae66"/>
<rect x="744" y="90" width="1" height="29" fill="#ea7c30"/>
<rect x="743" y="94" width="3" height="18" fill="#ea7c30"/>
<rect x="744" y="95" width="1" height="16" fill="#3b434c"/>
<rect x="748" y="104" width="1" height="11" fill="#ea7c30"/>
<rect x="747" y="109" width="3" height="2" fill="#ea7c30"/>
<rect x="748" y="109" width="1" height="2" fill="#ffae66"/>
<rect x="752" y="98" width="1" height="14" fill="#ea7c30"/>
<rect x="751" y="102" width="3" height="5" fill="#ea7c30"/>
<rect x="752" y="103" width="1" height="3" fill="#ffae66"/>
<rect x="756" y="87" width="1" height="15" fill="#ea7c30"/>
<rect x="755" y="91" width="3" height="9" fill="#ea7c30"/>
<rect x="756" y="92" width="1" height="7" fill="#ffae66"/>
<rect x="760" y="73" width="1" height="20" fill="#ea7c30"/>
<rect x="759" y="78" width="3" height="12" fill="#ea7c30"/>
<rect x="760" y="79" width="1" height="10" fill="#ffae66"/>
<rect x="764" y="73" width="1" height="18" fill="#ea7c30"/>
<rect x="763" y="77" width="3" height="10" fill="#ea7c30"/>
<rect x="764" y="78" width="1" height="8" fill="#3b434c"/>
<rect x="769" y="83" width="1" height="14" fill="#ea7c30"/>
<rect x="768" y="87" width="3" height="9" fill="#ea7c30"/>
<rect x="769" y="88" width="1" height="7" fill="#3b434c"/>
<rect x="773" y="92" width="1" height="12" fill="#ea7c30"/>
<rect x="772" y="96" width="3" height="4" fill="#ea7c30"/>
<rect x="773" y="97" width="1" height="2" fill="#3b434c"/>
<rect x="777" y="91" width="1" height="13" fill="#ea7c30"/>
<rect x="776" y="98" width="3" height="2" fill="#ea7c30"/>
<rect x="777" y="98" width="1" height="2" fill="#ffae66"/>
<rect x="781" y="86" width="1" height="12" fill="#ea7c30"/>
<rect x="780" y="89" width="3" height="8" fill="#ea7c30"/>
<rect x="781" y="90" width="1" height="6" fill="#ffae66"/>
<rect x="785" y="76" width="1" height="13" fill="#ea7c30"/>
<rect x="784" y="83" width="3" height="5" fill="#ea7c30"/>
<rect x="785" y="84" width="1" height="3" fill="#ffae66"/>
<rect x="789" y="66" width="1" height="27" fill="#ea7c30"/>
<rect x="788" y="69" width="3" height="13" fill="#ea7c30"/>
<rect x="789" y="70" width="1" height="11" fill="#ffae66"/>
<rect x="793" y="38" width="1" height="33" fill="#ea7c30"/>
<rect x="792" y="45" width="3" height="23" fill="#ea7c30"/>
<rect x="793" y="46" width="1" height="21" fill="#ffae66"/>
<rect x="797" y="38" width="1" height="8" fill="#ea7c30"/>
<rect x="801" y="38" width="1" height="12" fill="#ea7c30"/>
<rect x="800" y="42" width="3" height="6" fill="#ea7c30"/>
<rect x="801" y="43" width="1" height="4" fill="#3b434c"/>
<rect x="805" y="42" width="1" height="12" fill="#ea7c30"/>
<rect x="804" y="44" width="3" height="2" fill="#ea7c30"/>
<rect x="805" y="44" width="1" height="2" fill="#ffae66"/>
<rect x="810" y="41" width="1" height="14" fill="#ea7c30"/>
<rect x="809" y="44" width="3" height="10" fill="#ea7c30"/>
<rect x="810" y="45" width="1" height="8" fill="#3b434c"/>
<rect x="814" y="49" width="1" height="39" fill="#ea7c30"/>
<rect x="813" y="54" width="3" height="31" fill="#ea7c30"/>
<rect x="814" y="55" width="1" height="29" fill="#3b434c"/>
<rect x="818" y="82" width="1" height="35" fill="#ea7c30"/>
<rect x="817" y="85" width="3" height="21" fill="#ea7c30"/>
<rect x="818" y="86" width="1" height="19" fill="#3b434c"/>
<rect x="822" y="100" width="1" height="8" fill="#ea7c30"/>
<rect x="821" y="106" width="3" height="2" fill="#ea7c30"/>
<rect x="822" y="106" width="1" height="2" fill="#ffae66"/>
<rect x="826" y="93" width="1" height="15" fill="#ea7c30"/>
<rect x="825" y="100" width="3" height="3" fill="#ea7c30"/>
<rect x="826" y="101" width="1" height="1" fill="#ffae66"/>
<rect x="830" y="95" width="1" height="21" fill="#ea7c30"/>
<rect x="829" y="100" width="3" height="12" fill="#ea7c30"/>
<rect x="830" y="101" width="1" height="10" fill="#3b434c"/>
<rect x="834" y="96" width="1" height="22" fill="#ea7c30"/>
<rect x="833" y="111" width="3" height="6" fill="#ea7c30"/>
<rect x="834" y="112" width="1" height="4" fill="#3b434c"/>
<rect x="838" y="105" width="1" height="22" fill="#ea7c30"/>
<rect x="837" y="116" width="3" height="6" fill="#ea7c30"/>
<rect x="838" y="117" width="1" height="4" fill="#3b434c"/>
<rect x="842" y="120" width="1" height="11" fill="#ea7c30"/>
<rect x="841" y="122" width="3" height="2" fill="#ea7c30"/>
<rect x="842" y="122" width="1" height="2" fill="#ffae66"/>
<rect x="846" y="120" width="1" height="8" fill="#ea7c30"/>
<rect x="845" y="123" width="3" height="3" fill="#ea7c30"/>
<rect x="846" y="124" width="1" height="1" fill="#3b434c"/>
<rect x="851" y="109" width="1" height="19" fill="#ea7c30"/>
<rect x="850" y="116" width="3" height="9" fill="#ea7c30"/>
<rect x="851" y="117" width="1" height="7" fill="#ffae66"/>
<rect x="855" y="110" width="1" height="8" fill="#ea7c30"/>
<rect x="854" y="112" width="3" height="3" fill="#ea7c30"/>
<rect x="855" y="113" width="1" height="1" fill="#ffae66"/>
<rect x="859" y="100" width="1" height="14" fill="#ea7c30"/>
<rect x="858" y="109" width="3" height="3" fill="#ea7c30"/>
<rect x="859" y="110" width="1" height="1" fill="#ffae66"/>
<rect x="863" y="99" width="1" height="25" fill="#ea7c30"/>
<rect x="862" y="106" width="3" height="7" fill="#ea7c30"/>
<rect x="863" y="107" width="1" height="5" fill="#3b434c"/>
<rect x="867" y="106" width="1" height="14" fill="#ea7c30"/>
<rect x="866" y="108" width="3" height="4" fill="#ea7c30"/>
<rect x="867" y="109" width="1" height="2" fill="#ffae66"/>
<rect x="871" y="105" width="1" height="4" fill="#ea7c30"/>
<rect x="870" y="106" width="3" height="2" fill="#ea7c30"/>
<rect x="871" y="106" width="1" height="2" fill="#ffae66"/>
<rect x="875" y="104" width="1" height="8" fill="#ea7c30"/>
<rect x="874" y="106" width="3" height="3" fill="#ea7c30"/>
<rect x="875" y="107" width="1" height="1" fill="#ffae66"/>
<rect x="879" y="104" width="1" height="10" fill="#ea7c30"/>
<rect x="878" y="106" width="3" height="2" fill="#ea7c30"/>
<rect x="879" y="106" width="1" height="2" fill="#ffae66"/>
<rect x="883" y="104" width="1" height="6" fill="#ea7c30"/>
<rect x="882" y="107" width="3" height="2" fill="#ea7c30"/>
<rect x="883" y="107" width="1" height="2" fill="#ffae66"/>
</g>
<g clip-path="url(#cpm)">
<path d="M16.7 192.5 L26.7 199.2 L40 203.7 L47.5 207.5 L60 210 L68.3 215 L76.7 220.8 L86.7 224.2 L96.7 228 L103.3 228 L113.3 225 L123.3 220 L133.3 210.8 L143.3 199.2 L153.3 190 L166.7 188.7 L173.3 183.3 L185 175.3 L186 175 L199.3 168.3 L211.5 155.8 L222.7 143 L232.7 142.5 L242.7 138.3 L252.7 135.8 L266 130.8 L276 129.7 L286 128.3 L289.3 126.7 L290 126.7 L300 127 L303.3 128.7" fill="none" stroke="#1515c0" stroke-width="1.2" stroke-linejoin="round"/>
<path d="M312.5 130.3 L318.3 130.8 L323.3 135.8 L330 142.5 L336.7 145.8 L342.5 147.5 L348.3 149.7 L361.7 152.5 L370 154.2 L376.7 159.2 L381.7 160.8 L395 160 L400 155 L410 140.8 L421.7 130.8 L436.7 123 L446.7 122.5 L460 120.3 L466.7 121.7 L480 123.3 L486.7 124.7 L496.7 130.3 L506.7 135.8 L520 137.5 L530 137 L540 139.2 L550 142 L560 146.7 L570 151.3 L590 151.7 L600 154.7 L611.7 157 L625 156.7 L633.3 158.3 L640 158 L650 154.2 L660 149.7 L668.3 145 L678.3 131.5 L688.3 119 L695 110.7 L703.3 104.8 L713.3 102.3 L726.7 102 L740 102.3 L753.3 102.3 L763.3 99.8 L773.3 98.7 L781.7 98.2 L790 94 L800 83.2 L810 76.5 L815 77 L825 83.7 L836.7 90.8 L848.3 98.3 L856.7 99.7 L863.3 102.5 L870 103 L878.3 103" fill="none" stroke="#1515c0" stroke-width="1.2" stroke-linejoin="round"/>
<path d="M16.7 157 L22.5 160 L40 167.5 L63.3 180 L80 188.3 L95 195 L113.3 198.7 L126.7 198 L140 194.2 L153.3 189.7 L166.7 188.7 L176.7 185.3 L192.7 181.7 L193.3 181.7 L211.5 173.3 L222.7 166.3 L236 163.3 L252.7 158.3 L266 153.3 L282.7 149.2 L288.3 147 L289.3 147 L305 145.8 L318.3 145 L330 148 L346.7 150.8 L360 151.3 L370 153 L380 155 L395 154.7 L403.3 151.3 L413.3 146.7 L430 140 L446.7 136.3 L460 134.7 L470 133.3 L486.7 133.3 L500 135.8 L513.3 137 L526.7 137.5 L540 137.5 L556.7 140.8 L573.3 143.3 L593.3 144.7 L610 148.3 L623.3 148.7 L633.3 150.8 L646.7 150.8 L656.7 148.7 L666.7 146.7 L675 142 L690 134 L701.7 127.3 L713.3 124 L730 121.5 L740 119 L753.3 118.2 L766.7 114.3 L780 112.3 L790 108.7 L800 103.2 L810 99 L816.7 98.7 L833.3 99.7 L843.3 102.5 L856.7 103.3 L870 104.2 L885 105" fill="none" stroke="#c21c22" stroke-width="1.25" stroke-linejoin="round"/>
</g>
<g>
<rect x="18" y="297" width="1" height="1" fill="#c82424"/>
<rect x="22" y="297" width="1" height="1" fill="#c82424"/>
<rect x="26" y="297" width="1" height="1" fill="#c82424"/>
<rect x="31" y="297" width="1" height="1" fill="#c82424"/>
<rect x="35" y="297" width="1" height="1" fill="#c82424"/>
<rect x="39" y="297" width="1" height="1" fill="#c82424"/>
<rect x="43" y="297" width="1" height="1" fill="#c82424"/>
<rect x="47" y="297" width="1" height="1" fill="#c82424"/>
<rect x="51" y="297" width="1" height="1" fill="#c82424"/>
<rect x="54.8" y="297" width="1.5" height="2" fill="#bd2828"/>
<rect x="59" y="297" width="1" height="1" fill="#c82424"/>
<rect x="63" y="297" width="1" height="1" fill="#c82424"/>
<rect x="67" y="297" width="1" height="1" fill="#c82424"/>
<rect x="72" y="297" width="1" height="1" fill="#c82424"/>
<rect x="75.8" y="297" width="1.5" height="2" fill="#bd2828"/>
<rect x="80" y="297" width="1" height="1" fill="#c82424"/>
<rect x="84" y="297" width="1" height="1" fill="#c82424"/>
<rect x="88" y="297" width="1" height="1" fill="#c82424"/>
<rect x="92" y="297" width="1" height="1" fill="#c82424"/>
<rect x="95.8" y="297" width="1.5" height="2" fill="#bd2828"/>
<rect x="99.8" y="296" width="1.5" height="3" fill="#bd2828"/>
<rect x="103.8" y="296" width="1.5" height="3" fill="#bd2828"/>
<rect x="107.8" y="295" width="1.5" height="4" fill="#bd2828"/>
<rect x="112.8" y="294" width="1.5" height="5" fill="#bd2828"/>
<rect x="116.8" y="294" width="1.5" height="5" fill="#bd2828"/>
<rect x="120.8" y="293" width="1.5" height="6" fill="#bd2828"/>
<rect x="124.8" y="292" width="1.5" height="7" fill="#bd2828"/>
<rect x="128.8" y="291" width="1.5" height="8" fill="#bd2828"/>
<rect x="132.8" y="290" width="1.5" height="9" fill="#bd2828"/>
<rect x="136.8" y="289" width="1.5" height="10" fill="#bd2828"/>
<rect x="140.8" y="288" width="1.5" height="11" fill="#bd2828"/>
<rect x="144.8" y="289" width="1.5" height="10" fill="#bd2828"/>
<rect x="148.8" y="289" width="1.5" height="10" fill="#bd2828"/>
<rect x="153.8" y="292" width="1.5" height="7" fill="#bd2828"/>
<rect x="157.8" y="294" width="1.5" height="5" fill="#bd2828"/>
<rect x="161.8" y="297" width="1.5" height="2" fill="#bd2828"/>
<rect x="166" y="297" width="1" height="1" fill="#c82424"/>
<rect x="170" y="297" width="1" height="1" fill="#c82424"/>
<rect x="174" y="297" width="1" height="1" fill="#c82424"/>
<rect x="178" y="297" width="1" height="1" fill="#c82424"/>
<rect x="182" y="297" width="1" height="1" fill="#c82424"/>
<rect x="186" y="297" width="1" height="1" fill="#c82424"/>
<rect x="190" y="297" width="1" height="1" fill="#c82424"/>
<rect x="195" y="297" width="1" height="1" fill="#c82424"/>
<rect x="199" y="297" width="1" height="1" fill="#c82424"/>
<rect x="203" y="297" width="1" height="1" fill="#c82424"/>
<rect x="206.8" y="296" width="1.5" height="3" fill="#bd2828"/>
<rect x="210.8" y="295" width="1.5" height="4" fill="#bd2828"/>
<rect x="214.8" y="294" width="1.5" height="5" fill="#bd2828"/>
<rect x="218.8" y="294" width="1.5" height="5" fill="#bd2828"/>
<rect x="222.8" y="295" width="1.5" height="4" fill="#bd2828"/>
<rect x="227" y="297" width="1" height="1" fill="#c82424"/>
<rect x="230.8" y="297" width="1.5" height="2" fill="#bd2828"/>
<rect x="235.8" y="297" width="1.5" height="3" fill="#bd2828"/>
<rect x="239.8" y="297" width="1.5" height="4" fill="#bd2828"/>
<rect x="243.8" y="297" width="1.5" height="4" fill="#bd2828"/>
<rect x="247.8" y="297" width="1.5" height="4" fill="#bd2828"/>
<rect x="251.8" y="297" width="1.5" height="4" fill="#bd2828"/>
<rect x="255.8" y="297" width="1.5" height="4" fill="#bd2828"/>
<rect x="259.8" y="297" width="1.5" height="5" fill="#bd2828"/>
<rect x="263.8" y="297" width="1.5" height="5" fill="#bd2828"/>
<rect x="267.8" y="297" width="1.5" height="5" fill="#bd2828"/>
<rect x="271.8" y="297" width="1.5" height="5" fill="#bd2828"/>
<rect x="276.8" y="297" width="1.5" height="5" fill="#bd2828"/>
<rect x="280.8" y="297" width="1.5" height="5" fill="#bd2828"/>
<rect x="284.8" y="297" width="1.5" height="5" fill="#bd2828"/>
<rect x="288.8" y="297" width="1.5" height="4" fill="#bd2828"/>
<rect x="292.8" y="297" width="1.5" height="4" fill="#bd2828"/>
<rect x="296.8" y="297" width="1.5" height="4" fill="#bd2828"/>
<rect x="300.8" y="297" width="1.5" height="4" fill="#bd2828"/>
<rect x="304.8" y="297" width="1.5" height="5" fill="#bd2828"/>
<rect x="308.8" y="297" width="1.5" height="6" fill="#bd2828"/>
<rect x="312.8" y="297" width="1.5" height="6" fill="#bd2828"/>
<rect x="317.8" y="297" width="1.5" height="6" fill="#bd2828"/>
<rect x="321.8" y="297" width="1.5" height="7" fill="#bd2828"/>
<rect x="325.8" y="297" width="1.5" height="9" fill="#bd2828"/>
<rect x="329.8" y="297" width="1.5" height="10" fill="#bd2828"/>
<rect x="333.8" y="297" width="1.5" height="8" fill="#bd2828"/>
<rect x="337.8" y="297" width="1.5" height="8" fill="#bd2828"/>
<rect x="341.8" y="297" width="1.5" height="7" fill="#bd2828"/>
<rect x="345.8" y="297" width="1.5" height="6" fill="#bd2828"/>
<rect x="349.8" y="297" width="1.5" height="5" fill="#bd2828"/>
<rect x="353.8" y="297" width="1.5" height="4" fill="#bd2828"/>
<rect x="358.8" y="297" width="1.5" height="3" fill="#bd2828"/>
<rect x="362.8" y="297" width="1.5" height="2" fill="#bd2828"/>
<rect x="367" y="297" width="1" height="1" fill="#c82424"/>
<rect x="370.8" y="297" width="1.5" height="3" fill="#bd2828"/>
<rect x="374.8" y="297" width="1.5" height="3" fill="#bd2828"/>
<rect x="378.8" y="297" width="1.5" height="4" fill="#bd2828"/>
<rect x="382.8" y="297" width="1.5" height="3" fill="#bd2828"/>
<rect x="386.8" y="297" width="1.5" height="2" fill="#bd2828"/>
<rect x="391" y="297" width="1" height="1" fill="#c82424"/>
<rect x="395" y="297" width="1" height="1" fill="#c82424"/>
<rect x="399.8" y="294" width="1.5" height="5" fill="#bd2828"/>
<rect x="403.8" y="291" width="1.5" height="8" fill="#bd2828"/>
<rect x="407.8" y="289" width="1.5" height="10" fill="#bd2828"/>
<rect x="411.8" y="288" width="1.5" height="11" fill="#bd2828"/>
<rect x="415.8" y="289" width="1.5" height="10" fill="#bd2828"/>
<rect x="419.8" y="290" width="1.5" height="9" fill="#bd2828"/>
<rect x="423.8" y="292" width="1.5" height="7" fill="#bd2828"/>
<rect x="427.8" y="293" width="1.5" height="6" fill="#bd2828"/>
<rect x="431.8" y="294" width="1.5" height="5" fill="#bd2828"/>
<rect x="435.8" y="295" width="1.5" height="4" fill="#bd2828"/>
<rect x="440.8" y="296" width="1.5" height="3" fill="#bd2828"/>
<rect x="445" y="297" width="1" height="1" fill="#c82424"/>
<rect x="448.8" y="297" width="1.5" height="3" fill="#bd2828"/>
<rect x="452.8" y="297" width="1.5" height="3" fill="#bd2828"/>
<rect x="456.8" y="297" width="1.5" height="3" fill="#bd2828"/>
<rect x="460.8" y="297" width="1.5" height="3" fill="#bd2828"/>
<rect x="464.8" y="297" width="1.5" height="4" fill="#bd2828"/>
<rect x="468.8" y="297" width="1.5" height="5" fill="#bd2828"/>
<rect x="472.8" y="297" width="1.5" height="5" fill="#bd2828"/>
<rect x="476.8" y="297" width="1.5" height="5" fill="#bd2828"/>
<rect x="481.8" y="297" width="1.5" height="6" fill="#bd2828"/>
<rect x="485.8" y="297" width="1.5" height="6" fill="#bd2828"/>
<rect x="489.8" y="297" width="1.5" height="5" fill="#bd2828"/>
<rect x="493.8" y="297" width="1.5" height="5" fill="#bd2828"/>
<rect x="497.8" y="297" width="1.5" height="6" fill="#bd2828"/>
<rect x="501.8" y="297" width="1.5" height="6" fill="#bd2828"/>
<rect x="505.8" y="297" width="1.5" height="5" fill="#bd2828"/>
<rect x="509.8" y="297" width="1.5" height="5" fill="#bd2828"/>
<rect x="513.8" y="297" width="1.5" height="4" fill="#bd2828"/>
<rect x="517.8" y="297" width="1.5" height="4" fill="#bd2828"/>
<rect x="522.8" y="297" width="1.5" height="3" fill="#bd2828"/>
<rect x="527" y="297" width="1" height="1" fill="#c82424"/>
<rect x="531" y="297" width="1" height="1" fill="#c82424"/>
<rect x="535" y="297" width="1" height="1" fill="#c82424"/>
<rect x="539" y="297" width="1" height="1" fill="#c82424"/>
<rect x="543" y="297" width="1" height="1" fill="#c82424"/>
<rect x="546.8" y="297" width="1.5" height="3" fill="#bd2828"/>
<rect x="550.8" y="297" width="1.5" height="4" fill="#bd2828"/>
<rect x="554.8" y="297" width="1.5" height="4" fill="#bd2828"/>
<rect x="558.8" y="297" width="1.5" height="4" fill="#bd2828"/>
<rect x="563.8" y="297" width="1.5" height="4" fill="#bd2828"/>
<rect x="567.8" y="297" width="1.5" height="4" fill="#bd2828"/>
<rect x="571.8" y="297" width="1.5" height="3" fill="#bd2828"/>
<rect x="576" y="297" width="1" height="1" fill="#c82424"/>
<rect x="580" y="297" width="1" height="1" fill="#c82424"/>
<rect x="584" y="297" width="1" height="1" fill="#c82424"/>
<rect x="588" y="297" width="1" height="1" fill="#c82424"/>
<rect x="592" y="297" width="1" height="1" fill="#c82424"/>
<rect x="596" y="297" width="1" height="1" fill="#c82424"/>
<rect x="600" y="297" width="1" height="1" fill="#c82424"/>
<rect x="605" y="297" width="1" height="1" fill="#c82424"/>
<rect x="609" y="297" width="1" height="1" fill="#c82424"/>
<rect x="613" y="297" width="1" height="1" fill="#c82424"/>
<rect x="617" y="297" width="1" height="1" fill="#c82424"/>
<rect x="621" y="297" width="1" height="1" fill="#c82424"/>
<rect x="625" y="297" width="1" height="1" fill="#c82424"/>
<rect x="629" y="297" width="1" height="1" fill="#c82424"/>
<rect x="633" y="297" width="1" height="1" fill="#c82424"/>
<rect x="637" y="297" width="1" height="1" fill="#c82424"/>
<rect x="640.8" y="297" width="1.5" height="2" fill="#bd2828"/>
<rect x="645.8" y="296" width="1.5" height="3" fill="#bd2828"/>
<rect x="649.8" y="295" width="1.5" height="4" fill="#bd2828"/>
<rect x="653.8" y="295" width="1.5" height="4" fill="#bd2828"/>
<rect x="657.8" y="294" width="1.5" height="5" fill="#bd2828"/>
<rect x="661.8" y="294" width="1.5" height="5" fill="#bd2828"/>
<rect x="665.8" y="294" width="1.5" height="5" fill="#bd2828"/>
<rect x="669.8" y="292" width="1.5" height="7" fill="#bd2828"/>
<rect x="673.8" y="291" width="1.5" height="8" fill="#bd2828"/>
<rect x="677.8" y="290" width="1.5" height="9" fill="#bd2828"/>
<rect x="681.8" y="291" width="1.5" height="8" fill="#bd2828"/>
<rect x="686.8" y="291" width="1.5" height="8" fill="#bd2828"/>
<rect x="690.8" y="291" width="1.5" height="8" fill="#bd2828"/>
<rect x="694.8" y="292" width="1.5" height="7" fill="#bd2828"/>
<rect x="698.8" y="294" width="1.5" height="5" fill="#bd2828"/>
<rect x="702.8" y="296" width="1.5" height="3" fill="#bd2828"/>
<rect x="707" y="297" width="1" height="1" fill="#c82424"/>
<rect x="710.8" y="297" width="1.5" height="2" fill="#bd2828"/>
<rect x="714.8" y="297" width="1.5" height="4" fill="#bd2828"/>
<rect x="718.8" y="297" width="1.5" height="5" fill="#bd2828"/>
<rect x="722.8" y="297" width="1.5" height="6" fill="#bd2828"/>
<rect x="727.8" y="297" width="1.5" height="7" fill="#bd2828"/>
<rect x="731.8" y="297" width="1.5" height="7" fill="#bd2828"/>
<rect x="735.8" y="297" width="1.5" height="7" fill="#bd2828"/>
<rect x="739.8" y="297" width="1.5" height="7" fill="#bd2828"/>
<rect x="743.8" y="297" width="1.5" height="7" fill="#bd2828"/>
<rect x="747.8" y="297" width="1.5" height="7" fill="#bd2828"/>
<rect x="751.8" y="297" width="1.5" height="5" fill="#bd2828"/>
<rect x="755.8" y="297" width="1.5" height="4" fill="#bd2828"/>
<rect x="759.8" y="297" width="1.5" height="3" fill="#bd2828"/>
<rect x="763.8" y="297" width="1.5" height="3" fill="#bd2828"/>
<rect x="768.8" y="297" width="1.5" height="3" fill="#bd2828"/>
<rect x="772.8" y="297" width="1.5" height="3" fill="#bd2828"/>
<rect x="776.8" y="297" width="1.5" height="3" fill="#bd2828"/>
<rect x="780.8" y="297" width="1.5" height="3" fill="#bd2828"/>
<rect x="785" y="297" width="1" height="1" fill="#c82424"/>
<rect x="789" y="297" width="1" height="1" fill="#c82424"/>
<rect x="792.8" y="296" width="1.5" height="3" fill="#bd2828"/>
<rect x="796.8" y="295" width="1.5" height="4" fill="#bd2828"/>
<rect x="800.8" y="295" width="1.5" height="4" fill="#bd2828"/>
<rect x="804.8" y="295" width="1.5" height="4" fill="#bd2828"/>
<rect x="809.8" y="296" width="1.5" height="3" fill="#bd2828"/>
<rect x="814" y="297" width="1" height="1" fill="#c82424"/>
<rect x="817.8" y="297" width="1.5" height="3" fill="#bd2828"/>
<rect x="821.8" y="297" width="1.5" height="4" fill="#bd2828"/>
<rect x="825.8" y="297" width="1.5" height="5" fill="#bd2828"/>
<rect x="829.8" y="297" width="1.5" height="5" fill="#bd2828"/>
<rect x="833.8" y="297" width="1.5" height="6" fill="#bd2828"/>
<rect x="837.8" y="297" width="1.5" height="7" fill="#bd2828"/>
<rect x="841.8" y="297" width="1.5" height="9" fill="#bd2828"/>
<rect x="845.8" y="297" width="1.5" height="9" fill="#bd2828"/>
<rect x="850.8" y="297" width="1.5" height="8" fill="#bd2828"/>
<rect x="854.8" y="297" width="1.5" height="8" fill="#bd2828"/>
<rect x="858.8" y="297" width="1.5" height="7" fill="#bd2828"/>
<rect x="862.8" y="297" width="1.5" height="6" fill="#bd2828"/>
<rect x="866.8" y="297" width="1.5" height="4" fill="#bd2828"/>
<rect x="870.8" y="297" width="1.5" height="3" fill="#bd2828"/>
<rect x="875" y="297" width="1" height="1" fill="#c82424"/>
<rect x="879" y="297" width="1" height="1" fill="#c82424"/>
<rect x="883" y="297" width="1" height="1" fill="#c82424"/>
</g>
<path d="M16.4 315.8 L30.1 314.6 L50.1 312.1 L54.2 310.7 L70.2 311.1 L76.2 312.5 L90.3 310.7 L100.3 308.5 L114.4 303.1 L126.4 297.1 L134.4 290.1 L142.5 284 L150.5 281 L156.5 281.6 L162.5 284.5 L174.6 284.5 L190.6 283.6 L202.7 282.8 L210.7 279 L218.7 275 L224.7 275.6 L230 279.6 L232.8 279.6 L242 283 L260.1 286.1 L280.2 289.1 L296.2 290.1 L310.3 295.1 L320.3 298.1 L330.3 305.7 L338.4 306.5 L354.4 306.1 L366.5 304.1 L378.5 307.1 L386.5 306.1 L396.6 302.1 L402.6 295.1 L410.6 287.1 L418.7 283 L426.7 284 L434.7 283 L442.7 285.7 L450 288.5 L452.8 288.5 L462 290.1 L474.1 294.1 L490.1 298.1 L502.2 303.1 L520.2 303.1 L534.3 300.1 L544.3 301.1 L554.4 304.5 L566.4 306.5 L578.4 303.7 L590.5 302.1 L606.5 302.1 L622.6 301.1 L636.6 301.7 L646.7 298.1 L656.7 294.5 L666.8 292.1 L670 287.1 L672.8 286.1 L678 281 L686.1 278 L692.1 275.6 L700.1 276.4 L708.1 279 L718.2 284 L728.2 288.5 L738.2 291.1 L748.3 293.1 L756.3 292.5 L764.3 291.1 L774.4 292.5 L782.4 293.1 L790.4 289.1 L798.4 285.1 L806.5 283 L812.5 283.6 L818.5 288.1 L826.5 292.1 L836.6 297.1 L844.6 304.1 L852.6 305.7 L864.7 305.7 L872.7 303.1 L885.8 302.5" fill="none" stroke="#111170" stroke-width="1.1"/>
<path d="M16.4 315.8 L30.1 314.6 L50.1 312.5 L70.2 311.1 L90.3 311.1 L100.3 310.1 L110.3 308.1 L122.4 304.5 L130.4 301.1 L138.4 296.1 L146.5 291.7 L154.5 287.7 L162.5 285.7 L174.6 284.5 L190.6 283.6 L202.7 283.2 L210.7 281.6 L220.7 279 L228.8 278.4 L232 278.4 L250.1 281 L270.1 284 L290.2 286.5 L310.3 290.1 L324.3 294.1 L334.4 299.1 L346.4 301.7 L358.4 303.1 L370.5 303.7 L382.5 304.5 L392.6 304.1 L400.6 302.1 L408.6 298.1 L416.6 293.1 L424.7 289.7 L432.7 287.7 L442.7 286.5 L450 286.5 L462 287.7 L474.1 289.7 L486.1 292.5 L500.2 297.7 L514.2 300.1 L530.3 301.1 L546.3 300.5 L560.4 302.1 L570.4 303.7 L586.5 303.1 L602.5 302.1 L620.6 301.7 L636.6 301.7 L648.7 299.7 L658.7 297.7 L668.8 295.1 L670 293.7 L676 290.1 L684 286.1 L692.1 282.4 L700.1 280 L708.1 279 L716.2 279.6 L726.2 281.6 L736.2 284.5 L746.3 287.1 L756.3 289.1 L766.3 289.7 L776.4 290.5 L784.4 291.1 L792.4 290.1 L800.5 288.1 L808.5 285.7 L814.5 285.1 L822.5 287.1 L830.6 289.7 L838.6 292.5 L846.6 296.5 L854.6 299.1 L864.7 301.1 L874.7 302.1 L885.8 302.5" fill="none" stroke="#b41a1a" stroke-width="1.4"/>
<circle cx="18.8" cy="315.6" r="1.6" fill="#e82222"/>
<circle cx="22.9" cy="315.2" r="1.6" fill="#e82222"/>
<circle cx="26.9" cy="314.8" r="1.6" fill="#e82222"/>
<circle cx="31" cy="314.5" r="1.6" fill="#e82222"/>
<circle cx="35.1" cy="314" r="1.6" fill="#e82222"/>
<circle cx="39.2" cy="313.6" r="1.6" fill="#e82222"/>
<circle cx="43.3" cy="313.2" r="1.6" fill="#e82222"/>
<circle cx="47.4" cy="312.8" r="1.6" fill="#e82222"/>
<circle cx="51.5" cy="312.4" r="1.6" fill="#e82222"/>
<circle cx="55.6" cy="312.2" r="1.6" fill="#e82222"/>
<circle cx="59.8" cy="311.9" r="1.6" fill="#e82222"/>
<circle cx="63.8" cy="311.6" r="1.6" fill="#e82222"/>
<circle cx="67.9" cy="311.3" r="1.6" fill="#e82222"/>
<circle cx="72" cy="311.1" r="1.6" fill="#e82222"/>
<circle cx="76.1" cy="311.1" r="1.6" fill="#e82222"/>
<circle cx="80.2" cy="311.1" r="1.6" fill="#e82222"/>
<circle cx="84.3" cy="311.1" r="1.6" fill="#e82222"/>
<circle cx="88.4" cy="311.1" r="1.6" fill="#e82222"/>
<circle cx="92.5" cy="310.9" r="1.6" fill="#e82222"/>
<circle cx="96.6" cy="310.5" r="1.6" fill="#e82222"/>
<circle cx="100.8" cy="310.1" r="1.6" fill="#e82222"/>
<circle cx="104.8" cy="309.2" r="1.6" fill="#e82222"/>
<circle cx="108.9" cy="308.4" r="1.6" fill="#e82222"/>
<circle cx="113" cy="307.3" r="1.6" fill="#e82222"/>
<circle cx="117.1" cy="306.1" r="1.6" fill="#e82222"/>
<circle cx="121.2" cy="304.9" r="1.6" fill="#e82222"/>
<circle cx="125.3" cy="303.3" r="1.6" fill="#e82222"/>
<circle cx="129.4" cy="301.5" r="1.6" fill="#e82222"/>
<circle cx="133.5" cy="299.2" r="1.6" fill="#e82222"/>
<circle cx="137.6" cy="296.6" r="1.6" fill="#e82222"/>
<circle cx="141.8" cy="294.3" r="1.6" fill="#e82222"/>
<circle cx="145.8" cy="292" r="1.6" fill="#e82222"/>
<circle cx="149.9" cy="289.9" r="1.6" fill="#e82222"/>
<circle cx="154" cy="287.9" r="1.6" fill="#e82222"/>
<circle cx="158.1" cy="286.7" r="1.6" fill="#e82222"/>
<circle cx="162.2" cy="285.7" r="1.6" fill="#e82222"/>
<circle cx="166.3" cy="285.3" r="1.6" fill="#e82222"/>
<circle cx="170.4" cy="284.9" r="1.6" fill="#e82222"/>
<circle cx="174.5" cy="284.5" r="1.6" fill="#e82222"/>
<circle cx="178.6" cy="284.2" r="1.6" fill="#e82222"/>
<circle cx="182.8" cy="284" r="1.6" fill="#e82222"/>
<circle cx="186.8" cy="283.8" r="1.6" fill="#e82222"/>
<circle cx="190.9" cy="283.6" r="1.6" fill="#e82222"/>
<circle cx="195" cy="283.5" r="1.6" fill="#e82222"/>
<circle cx="199.1" cy="283.4" r="1.6" fill="#e82222"/>
<circle cx="203.2" cy="283.1" r="1.6" fill="#e82222"/>
<circle cx="207.3" cy="282.3" r="1.6" fill="#e82222"/>
<circle cx="211.4" cy="281.4" r="1.6" fill="#e82222"/>
<circle cx="215.5" cy="280.4" r="1.6" fill="#e82222"/>
<circle cx="219.6" cy="279.3" r="1.6" fill="#e82222"/>
<circle cx="223.7" cy="278.8" r="1.6" fill="#e82222"/>
<circle cx="227.8" cy="278.5" r="1.6" fill="#e82222"/>
<circle cx="231.9" cy="278.4" r="1.6" fill="#e82222"/>
<circle cx="236" cy="279" r="1.6" fill="#e82222"/>
<circle cx="240.1" cy="279.6" r="1.6" fill="#e82222"/>
<circle cx="244.2" cy="280.2" r="1.6" fill="#e82222"/>
<circle cx="248.3" cy="280.8" r="1.6" fill="#e82222"/>
<circle cx="252.4" cy="281.4" r="1.6" fill="#e82222"/>
<circle cx="256.5" cy="282" r="1.6" fill="#e82222"/>
<circle cx="260.6" cy="282.6" r="1.6" fill="#e82222"/>
<circle cx="264.8" cy="283.2" r="1.6" fill="#e82222"/>
<circle cx="268.8" cy="283.9" r="1.6" fill="#e82222"/>
<circle cx="272.9" cy="284.4" r="1.6" fill="#e82222"/>
<circle cx="277" cy="284.9" r="1.6" fill="#e82222"/>
<circle cx="281.1" cy="285.4" r="1.6" fill="#e82222"/>
<circle cx="285.2" cy="285.9" r="1.6" fill="#e82222"/>
<circle cx="289.3" cy="286.4" r="1.6" fill="#e82222"/>
<circle cx="293.4" cy="287" r="1.6" fill="#e82222"/>
<circle cx="297.5" cy="287.8" r="1.6" fill="#e82222"/>
<circle cx="301.6" cy="288.5" r="1.6" fill="#e82222"/>
<circle cx="305.8" cy="289.3" r="1.6" fill="#e82222"/>
<circle cx="309.8" cy="290" r="1.6" fill="#e82222"/>
<circle cx="313.9" cy="291.1" r="1.6" fill="#e82222"/>
<circle cx="318" cy="292.3" r="1.6" fill="#e82222"/>
<circle cx="322.1" cy="293.5" r="1.6" fill="#e82222"/>
<circle cx="326.2" cy="295" r="1.6" fill="#e82222"/>
<circle cx="330.3" cy="297.1" r="1.6" fill="#e82222"/>
<circle cx="334.4" cy="299.1" r="1.6" fill="#e82222"/>
<circle cx="338.5" cy="300" r="1.6" fill="#e82222"/>
<circle cx="342.6" cy="300.9" r="1.6" fill="#e82222"/>
<circle cx="346.8" cy="301.8" r="1.6" fill="#e82222"/>
<circle cx="350.8" cy="302.2" r="1.6" fill="#e82222"/>
<circle cx="354.9" cy="302.7" r="1.6" fill="#e82222"/>
<circle cx="359" cy="303.1" r="1.6" fill="#e82222"/>
<circle cx="363.1" cy="303.4" r="1.6" fill="#e82222"/>
<circle cx="367.2" cy="303.6" r="1.6" fill="#e82222"/>
<circle cx="371.3" cy="303.8" r="1.6" fill="#e82222"/>
<circle cx="375.4" cy="304" r="1.6" fill="#e82222"/>
<circle cx="379.5" cy="304.3" r="1.6" fill="#e82222"/>
<circle cx="383.6" cy="304.5" r="1.6" fill="#e82222"/>
<circle cx="387.7" cy="304.3" r="1.6" fill="#e82222"/>
<circle cx="391.8" cy="304.1" r="1.6" fill="#e82222"/>
<circle cx="395.9" cy="303.3" r="1.6" fill="#e82222"/>
<circle cx="400" cy="302.2" r="1.6" fill="#e82222"/>
<circle cx="404.1" cy="300.3" r="1.6" fill="#e82222"/>
<circle cx="408.2" cy="298.3" r="1.6" fill="#e82222"/>
<circle cx="412.3" cy="295.8" r="1.6" fill="#e82222"/>
<circle cx="416.4" cy="293.2" r="1.6" fill="#e82222"/>
<circle cx="420.5" cy="291.4" r="1.6" fill="#e82222"/>
<circle cx="424.6" cy="289.7" r="1.6" fill="#e82222"/>
<circle cx="428.7" cy="288.7" r="1.6" fill="#e82222"/>
<circle cx="432.8" cy="287.6" r="1.6" fill="#e82222"/>
<circle cx="436.9" cy="287.2" r="1.6" fill="#e82222"/>
<circle cx="441" cy="286.7" r="1.6" fill="#e82222"/>
<circle cx="445.1" cy="286.5" r="1.6" fill="#e82222"/>
<circle cx="449.2" cy="286.5" r="1.6" fill="#e82222"/>
<circle cx="453.3" cy="286.8" r="1.6" fill="#e82222"/>
<circle cx="457.4" cy="287.2" r="1.6" fill="#e82222"/>
<circle cx="461.5" cy="287.6" r="1.6" fill="#e82222"/>
<circle cx="465.6" cy="288.3" r="1.6" fill="#e82222"/>
<circle cx="469.7" cy="288.9" r="1.6" fill="#e82222"/>
<circle cx="473.8" cy="289.6" r="1.6" fill="#e82222"/>
<circle cx="477.9" cy="290.6" r="1.6" fill="#e82222"/>
<circle cx="482" cy="291.5" r="1.6" fill="#e82222"/>
<circle cx="486.1" cy="292.5" r="1.6" fill="#e82222"/>
<circle cx="490.2" cy="294" r="1.6" fill="#e82222"/>
<circle cx="494.3" cy="295.5" r="1.6" fill="#e82222"/>
<circle cx="498.4" cy="297.1" r="1.6" fill="#e82222"/>
<circle cx="502.5" cy="298.1" r="1.6" fill="#e82222"/>
<circle cx="506.6" cy="298.8" r="1.6" fill="#e82222"/>
<circle cx="510.7" cy="299.5" r="1.6" fill="#e82222"/>
<circle cx="514.8" cy="300.1" r="1.6" fill="#e82222"/>
<circle cx="518.9" cy="300.4" r="1.6" fill="#e82222"/>
<circle cx="523" cy="300.7" r="1.6" fill="#e82222"/>
<circle cx="527.1" cy="300.9" r="1.6" fill="#e82222"/>
<circle cx="531.2" cy="301.1" r="1.6" fill="#e82222"/>
<circle cx="535.3" cy="300.9" r="1.6" fill="#e82222"/>
<circle cx="539.4" cy="300.8" r="1.6" fill="#e82222"/>
<circle cx="543.5" cy="300.6" r="1.6" fill="#e82222"/>
<circle cx="547.6" cy="300.7" r="1.6" fill="#e82222"/>
<circle cx="551.8" cy="301.1" r="1.6" fill="#e82222"/>
<circle cx="555.8" cy="301.6" r="1.6" fill="#e82222"/>
<circle cx="559.9" cy="302.1" r="1.6" fill="#e82222"/>
<circle cx="564" cy="302.7" r="1.6" fill="#e82222"/>
<circle cx="568.1" cy="303.4" r="1.6" fill="#e82222"/>
<circle cx="572.2" cy="303.6" r="1.6" fill="#e82222"/>
<circle cx="576.3" cy="303.5" r="1.6" fill="#e82222"/>
<circle cx="580.4" cy="303.3" r="1.6" fill="#e82222"/>
<circle cx="584.5" cy="303.2" r="1.6" fill="#e82222"/>
<circle cx="588.6" cy="303" r="1.6" fill="#e82222"/>
<circle cx="592.8" cy="302.7" r="1.6" fill="#e82222"/>
<circle cx="596.8" cy="302.5" r="1.6" fill="#e82222"/>
<circle cx="600.9" cy="302.2" r="1.6" fill="#e82222"/>
<circle cx="605" cy="302.1" r="1.6" fill="#e82222"/>
<circle cx="609.1" cy="302" r="1.6" fill="#e82222"/>
<circle cx="613.2" cy="301.9" r="1.6" fill="#e82222"/>
<circle cx="617.3" cy="301.8" r="1.6" fill="#e82222"/>
<circle cx="621.4" cy="301.7" r="1.6" fill="#e82222"/>
<circle cx="625.5" cy="301.7" r="1.6" fill="#e82222"/>
<circle cx="629.6" cy="301.7" r="1.6" fill="#e82222"/>
<circle cx="633.8" cy="301.7" r="1.6" fill="#e82222"/>
<circle cx="637.8" cy="301.5" r="1.6" fill="#e82222"/>
<circle cx="641.9" cy="300.8" r="1.6" fill="#e82222"/>
<circle cx="646" cy="300.1" r="1.6" fill="#e82222"/>
<circle cx="650.1" cy="299.4" r="1.6" fill="#e82222"/>
<circle cx="654.2" cy="298.6" r="1.6" fill="#e82222"/>
<circle cx="658.3" cy="297.8" r="1.6" fill="#e82222"/>
<circle cx="662.4" cy="296.7" r="1.6" fill="#e82222"/>
<circle cx="666.5" cy="295.7" r="1.6" fill="#e82222"/>
<circle cx="670.6" cy="293.3" r="1.6" fill="#e82222"/>
<circle cx="674.8" cy="290.8" r="1.6" fill="#e82222"/>
<circle cx="678.8" cy="288.7" r="1.6" fill="#e82222"/>
<circle cx="682.9" cy="286.6" r="1.6" fill="#e82222"/>
<circle cx="687" cy="284.7" r="1.6" fill="#e82222"/>
<circle cx="691.1" cy="282.9" r="1.6" fill="#e82222"/>
<circle cx="695.2" cy="281.5" r="1.6" fill="#e82222"/>
<circle cx="699.3" cy="280.3" r="1.6" fill="#e82222"/>
<circle cx="703.4" cy="279.6" r="1.6" fill="#e82222"/>
<circle cx="707.5" cy="279.1" r="1.6" fill="#e82222"/>
<circle cx="711.6" cy="279.3" r="1.6" fill="#e82222"/>
<circle cx="715.7" cy="279.6" r="1.6" fill="#e82222"/>
<circle cx="719.8" cy="280.4" r="1.6" fill="#e82222"/>
<circle cx="723.9" cy="281.2" r="1.6" fill="#e82222"/>
<circle cx="728" cy="282.2" r="1.6" fill="#e82222"/>
<circle cx="732.1" cy="283.3" r="1.6" fill="#e82222"/>
<circle cx="736.2" cy="284.5" r="1.6" fill="#e82222"/>
<circle cx="740.3" cy="285.5" r="1.6" fill="#e82222"/>
<circle cx="744.4" cy="286.6" r="1.6" fill="#e82222"/>
<circle cx="748.5" cy="287.5" r="1.6" fill="#e82222"/>
<circle cx="752.6" cy="288.3" r="1.6" fill="#e82222"/>
<circle cx="756.7" cy="289.1" r="1.6" fill="#e82222"/>
<circle cx="760.8" cy="289.3" r="1.6" fill="#e82222"/>
<circle cx="764.9" cy="289.6" r="1.6" fill="#e82222"/>
<circle cx="769" cy="289.9" r="1.6" fill="#e82222"/>
<circle cx="773.1" cy="290.2" r="1.6" fill="#e82222"/>
<circle cx="777.2" cy="290.5" r="1.6" fill="#e82222"/>
<circle cx="781.3" cy="290.8" r="1.6" fill="#e82222"/>
<circle cx="785.4" cy="290.9" r="1.6" fill="#e82222"/>
<circle cx="789.5" cy="290.4" r="1.6" fill="#e82222"/>
<circle cx="793.6" cy="289.8" r="1.6" fill="#e82222"/>
<circle cx="797.7" cy="288.7" r="1.6" fill="#e82222"/>
<circle cx="801.8" cy="287.6" r="1.6" fill="#e82222"/>
<circle cx="805.9" cy="286.4" r="1.6" fill="#e82222"/>
<circle cx="810" cy="285.5" r="1.6" fill="#e82222"/>
<circle cx="814.1" cy="285.1" r="1.6" fill="#e82222"/>
<circle cx="818.2" cy="286" r="1.6" fill="#e82222"/>
<circle cx="822.3" cy="287" r="1.6" fill="#e82222"/>
<circle cx="826.4" cy="288.3" r="1.6" fill="#e82222"/>
<circle cx="830.5" cy="289.7" r="1.6" fill="#e82222"/>
<circle cx="834.6" cy="291.1" r="1.6" fill="#e82222"/>
<circle cx="838.7" cy="292.6" r="1.6" fill="#e82222"/>
<circle cx="842.8" cy="294.6" r="1.6" fill="#e82222"/>
<circle cx="846.9" cy="296.6" r="1.6" fill="#e82222"/>
<circle cx="851" cy="297.9" r="1.6" fill="#e82222"/>
<circle cx="855.1" cy="299.2" r="1.6" fill="#e82222"/>
<circle cx="859.2" cy="300" r="1.6" fill="#e82222"/>
<circle cx="863.3" cy="300.8" r="1.6" fill="#e82222"/>
<circle cx="867.4" cy="301.4" r="1.6" fill="#e82222"/>
<circle cx="871.5" cy="301.8" r="1.6" fill="#e82222"/>
<circle cx="875.6" cy="302.1" r="1.6" fill="#e82222"/>
<circle cx="879.7" cy="302.3" r="1.6" fill="#e82222"/>
<circle cx="883.8" cy="302.4" r="1.6" fill="#e82222"/>
<path d="M51.1 400 L51.1 376.4 L55.2 371.4 L58.2 377.4 L63.2 382.4 L72.2 383.4 L78.2 380.4 L80.6 372.4 L83.3 375.4 L87.3 374.4 L92.3 380.4 L96.3 380.4 L99.3 366.3 L103.3 362.3 L108.3 364.3 L114.4 360.3 L120.4 353.3 L125.4 358.3 L129.4 346.3 L136.4 339.2 L140.5 342.7 L148.5 339.2 L153.5 343.3 L158.5 356.3 L162.5 364.3 L166.5 358.3 L170.6 347.9 L176.6 351.3 L184.6 348.9 L191.6 356.3 L198.7 350.3 L203.7 339.8 L210.7 339.8 L214.7 339 L218.7 339 L220.7 339 L222.7 346.3 L226.8 356.3 L230 361.3 L232.8 361.3 L236 361.3 L240 353.9 L244 349.9 L249.1 363.3 L254.1 356.7 L260.1 355.3 L264.1 356.3 L268.1 354.3 L273.2 356.7 L277.2 356.7 L282.2 363.3 L289.2 354.3 L294.2 363.3 L297.2 360.7 L302.3 368.7 L310.3 368.3 L314.3 370.3 L318.3 367.3 L322.3 388.4 L326.3 384.8 L330.3 386 L334.4 378.4 L338.4 372.4 L346.4 379.4 L351.4 372.8 L355.4 373.4 L359.5 365.3 L364.5 371.4 L368.5 372.4 L374.5 382.4 L378.5 379.4 L386.5 365.3 L392.6 369.9 L396.6 358.3 L400.6 341.2 L404.6 340.2 L408.6 343.9 L412.6 342.3 L417.7 348.3 L420.7 347.3 L425.7 353.3 L429.7 352.7 L433.7 349.3 L437.7 352.3 L442.7 363.3 L450.8 359.9 L453 362.3 L454.8 362.3 L458 358.3 L462 361.3 L466.1 369.3 L470.1 366.7 L475.1 372.4 L479.1 367.3 L486.1 368.3 L490.1 382.4 L495.2 378.4 L502.2 380 L507.2 372.8 L510.2 374.8 L516.2 370.3 L520.2 372.4 L523.3 381.4 L527.3 360.3 L531.3 361.3 L535.3 364.3 L539.3 374 L543.3 370.3 L548.3 378.8 L552.4 378.8 L556.4 375.4 L560.4 378.8 L564.4 383.4 L568.4 378.4 L572.4 364.3 L576.4 369.3 L580.5 365.3 L584.5 370.3 L589.5 367.3 L593.5 368.3 L598.5 372.8 L604.5 373.4 L610.6 376.4 L613.6 374.4 L617.6 361.3 L621.6 365.9 L625.6 371.4 L633.6 371.4 L638.7 365.9 L642.7 362.7 L647.7 351.9 L653.7 350.3 L658.7 355.3 L662.7 350.3 L666.8 343.3 L668.8 339 L670 339 L674 339 L676 339 L679 339 L684 339 L688.1 339 L691.7 339 L693.1 339 L695.1 349.3 L699.1 347.3 L704.1 354.3 L709.1 356.7 L716.2 357.3 L720.2 364.3 L724.6 361.3 L728.2 368.3 L734.2 362.3 L740.2 358.3 L744.7 368.3 L750.3 364.3 L756.3 358.3 L761.3 351.9 L768.3 360.3 L773.4 365.3 L777.4 363.3 L782.4 357.3 L786.4 355.3 L790.4 347.3 L794.4 339.8 L798.4 339.2 L802.5 343.3 L806.5 342.3 L810.5 349.3 L814.5 368.3 L818.5 376.4 L822.5 377.4 L826.5 372.4 L830.6 377.4 L836.6 380.4 L840.6 382.8 L846.6 383.4 L851.6 375.4 L855.6 373.4 L859.7 370.3 L863.7 374.4 L867.7 369.3 L871.7 369.3 L875.7 371.4 L879.7 369.3 L883.7 369.3 L883.7 400Z" fill="url(#rsig)" clip-path="url(#cpr)"/>
<rect x="17" y="338" width="867" height="1.9" fill="#1515ae"/>
<rect x="17" y="392" width="867" height="1.9" fill="#1515ae"/>
<path d="M51.1 376.4 L55.2 371.4 L58.2 377.4 L63.2 382.4 L72.2 383.4 L78.2 380.4 L80.6 372.4 L83.3 375.4 L87.3 374.4 L92.3 380.4 L96.3 380.4 L99.3 366.3 L103.3 362.3 L108.3 364.3 L114.4 360.3 L120.4 353.3 L125.4 358.3 L129.4 346.3 L136.4 339.2 L140.5 342.7 L148.5 339.2 L153.5 343.3 L158.5 356.3 L162.5 364.3 L166.5 358.3 L170.6 347.9 L176.6 351.3 L184.6 348.9 L191.6 356.3 L198.7 350.3 L203.7 339.8 L210.7 339.8 L214.7 334.6 L218.7 333.2 L220.7 336.2 L222.7 346.3 L226.8 356.3 L230 361.3 L232.8 361.3 L236 361.3 L240 353.9 L244 349.9 L249.1 363.3 L254.1 356.7 L260.1 355.3 L264.1 356.3 L268.1 354.3 L273.2 356.7 L277.2 356.7 L282.2 363.3 L289.2 354.3 L294.2 363.3 L297.2 360.7 L302.3 368.7 L310.3 368.3 L314.3 370.3 L318.3 367.3 L322.3 388.4 L326.3 384.8 L330.3 386 L334.4 378.4 L338.4 372.4 L346.4 379.4 L351.4 372.8 L355.4 373.4 L359.5 365.3 L364.5 371.4 L368.5 372.4 L374.5 382.4 L378.5 379.4 L386.5 365.3 L392.6 369.9 L396.6 358.3 L400.6 341.2 L404.6 340.2 L408.6 343.9 L412.6 342.3 L417.7 348.3 L420.7 347.3 L425.7 353.3 L429.7 352.7 L433.7 349.3 L437.7 352.3 L442.7 363.3 L450.8 359.9 L453 362.3 L454.8 362.3 L458 358.3 L462 361.3 L466.1 369.3 L470.1 366.7 L475.1 372.4 L479.1 367.3 L486.1 368.3 L490.1 382.4 L495.2 378.4 L502.2 380 L507.2 372.8 L510.2 374.8 L516.2 370.3 L520.2 372.4 L523.3 381.4 L527.3 360.3 L531.3 361.3 L535.3 364.3 L539.3 374 L543.3 370.3 L548.3 378.8 L552.4 378.8 L556.4 375.4 L560.4 378.8 L564.4 383.4 L568.4 378.4 L572.4 364.3 L576.4 369.3 L580.5 365.3 L584.5 370.3 L589.5 367.3 L593.5 368.3 L598.5 372.8 L604.5 373.4 L610.6 376.4 L613.6 374.4 L617.6 361.3 L621.6 365.9 L625.6 371.4 L633.6 371.4 L638.7 365.9 L642.7 362.7 L647.7 351.9 L653.7 350.3 L658.7 355.3 L662.7 350.3 L666.8 343.3 L668.8 334.2 L670 333.8 L674 330.2 L676 332.6 L679 330.2 L684 335.2 L688.1 334.2 L691.7 327.2 L693.1 338.2 L695.1 349.3 L699.1 347.3 L704.1 354.3 L709.1 356.7 L716.2 357.3 L720.2 364.3 L724.6 361.3 L728.2 368.3 L734.2 362.3 L740.2 358.3 L744.7 368.3 L750.3 364.3 L756.3 358.3 L761.3 351.9 L768.3 360.3 L773.4 365.3 L777.4 363.3 L782.4 357.3 L786.4 355.3 L790.4 347.3 L794.4 339.8 L798.4 339.2 L802.5 343.3 L806.5 342.3 L810.5 349.3 L814.5 368.3 L818.5 376.4 L822.5 377.4 L826.5 372.4 L830.6 377.4 L836.6 380.4 L840.6 382.8 L846.6 383.4 L851.6 375.4 L855.6 373.4 L859.7 370.3 L863.7 374.4 L867.7 369.3 L871.7 369.3 L875.7 371.4 L879.7 369.3 L883.7 369.3" fill="none" stroke="#f39a38" stroke-width="1" stroke-linejoin="round" clip-path="url(#cpr)"/>
<path d="M51.1 376.4 L55.2 371.4 L58.2 377.4 L63.2 382.4 L72.2 383.4 L78.2 380.4 L80.6 372.4 L83.3 375.4 L87.3 374.4 L92.3 380.4 L96.3 380.4 L99.3 366.3 L103.3 362.3 L108.3 364.3 L114.4 360.3 L120.4 353.3 L125.4 358.3 L129.4 346.3 L136.4 339.2 L140.5 342.7 L148.5 339.2 L153.5 343.3 L158.5 356.3 L162.5 364.3 L166.5 358.3 L170.6 347.9 L176.6 351.3 L184.6 348.9 L191.6 356.3 L198.7 350.3 L203.7 339.8 L210.7 339.8 L214.7 334.6 L218.7 333.2 L220.7 336.2 L222.7 346.3 L226.8 356.3 L230 361.3 L232.8 361.3 L236 361.3 L240 353.9 L244 349.9 L249.1 363.3 L254.1 356.7 L260.1 355.3 L264.1 356.3 L268.1 354.3 L273.2 356.7 L277.2 356.7 L282.2 363.3 L289.2 354.3 L294.2 363.3 L297.2 360.7 L302.3 368.7 L310.3 368.3 L314.3 370.3 L318.3 367.3 L322.3 388.4 L326.3 384.8 L330.3 386 L334.4 378.4 L338.4 372.4 L346.4 379.4 L351.4 372.8 L355.4 373.4 L359.5 365.3 L364.5 371.4 L368.5 372.4 L374.5 382.4 L378.5 379.4 L386.5 365.3 L392.6 369.9 L396.6 358.3 L400.6 341.2 L404.6 340.2 L408.6 343.9 L412.6 342.3 L417.7 348.3 L420.7 347.3 L425.7 353.3 L429.7 352.7 L433.7 349.3 L437.7 352.3 L442.7 363.3 L450.8 359.9 L453 362.3 L454.8 362.3 L458 358.3 L462 361.3 L466.1 369.3 L470.1 366.7 L475.1 372.4 L479.1 367.3 L486.1 368.3 L490.1 382.4 L495.2 378.4 L502.2 380 L507.2 372.8 L510.2 374.8 L516.2 370.3 L520.2 372.4 L523.3 381.4 L527.3 360.3 L531.3 361.3 L535.3 364.3 L539.3 374 L543.3 370.3 L548.3 378.8 L552.4 378.8 L556.4 375.4 L560.4 378.8 L564.4 383.4 L568.4 378.4 L572.4 364.3 L576.4 369.3 L580.5 365.3 L584.5 370.3 L589.5 367.3 L593.5 368.3 L598.5 372.8 L604.5 373.4 L610.6 376.4 L613.6 374.4 L617.6 361.3 L621.6 365.9 L625.6 371.4 L633.6 371.4 L638.7 365.9 L642.7 362.7 L647.7 351.9 L653.7 350.3 L658.7 355.3 L662.7 350.3 L666.8 343.3 L668.8 334.2 L670 333.8 L674 330.2 L676 332.6 L679 330.2 L684 335.2 L688.1 334.2 L691.7 327.2 L693.1 338.2 L695.1 349.3 L699.1 347.3 L704.1 354.3 L709.1 356.7 L716.2 357.3 L720.2 364.3 L724.6 361.3 L728.2 368.3 L734.2 362.3 L740.2 358.3 L744.7 368.3 L750.3 364.3 L756.3 358.3 L761.3 351.9 L768.3 360.3 L773.4 365.3 L777.4 363.3 L782.4 357.3 L786.4 355.3 L790.4 347.3 L794.4 339.8 L798.4 339.2 L802.5 343.3 L806.5 342.3 L810.5 349.3 L814.5 368.3 L818.5 376.4 L822.5 377.4 L826.5 372.4 L830.6 377.4 L836.6 380.4 L840.6 382.8 L846.6 383.4 L851.6 375.4 L855.6 373.4 L859.7 370.3 L863.7 374.4 L867.7 369.3 L871.7 369.3 L875.7 371.4 L879.7 369.3 L883.7 369.3" fill="none" stroke="#e63be6" stroke-width="1.1" stroke-linejoin="round" clip-path="url(#cp70)"/>
<g shape-rendering="crispEdges">
<rect x="16.5" y="36.5" width="884" height="231" fill="none" stroke="#aebfce" stroke-width="1"/>
<rect x="16.5" y="273.5" width="884" height="45" fill="none" stroke="#aebfce" stroke-width="1"/>
<rect x="16.5" y="324.5" width="884" height="76" fill="none" stroke="#aebfce" stroke-width="1"/>
<rect x="901" y="65" width="3" height="1" fill="#aebfce"/>
<rect x="901" y="105" width="3" height="1" fill="#aebfce"/>
<rect x="901" y="145" width="3" height="1" fill="#aebfce"/>
<rect x="901" y="185" width="3" height="1" fill="#aebfce"/>
<rect x="901" y="225" width="3" height="1" fill="#aebfce"/>
<rect x="901" y="297" width="3" height="1" fill="#aebfce"/>
<rect x="901" y="351" width="3" height="1" fill="#aebfce"/>
<rect x="901" y="379" width="3" height="1" fill="#aebfce"/>
<rect x="39" y="401" width="1" height="3" fill="#c4d2de"/>
<rect x="63" y="401" width="1" height="3" fill="#c4d2de"/>
<rect x="88" y="401" width="1" height="3" fill="#c4d2de"/>
<rect x="113" y="401" width="1" height="3" fill="#c4d2de"/>
<rect x="137" y="401" width="1" height="3" fill="#c4d2de"/>
<rect x="162" y="401" width="1" height="3" fill="#c4d2de"/>
<rect x="186" y="401" width="1" height="3" fill="#c4d2de"/>
<rect x="236" y="401" width="1" height="3" fill="#c4d2de"/>
<rect x="260" y="401" width="1" height="3" fill="#c4d2de"/>
<rect x="285" y="401" width="1" height="3" fill="#c4d2de"/>
<rect x="309" y="401" width="1" height="3" fill="#c4d2de"/>
<rect x="334" y="401" width="1" height="3" fill="#c4d2de"/>
<rect x="359" y="401" width="1" height="3" fill="#c4d2de"/>
<rect x="383" y="401" width="1" height="3" fill="#c4d2de"/>
<rect x="408" y="401" width="1" height="3" fill="#c4d2de"/>
<rect x="433" y="401" width="1" height="3" fill="#c4d2de"/>
<rect x="457" y="401" width="1" height="3" fill="#c4d2de"/>
<rect x="482" y="401" width="1" height="3" fill="#c4d2de"/>
<rect x="506" y="401" width="1" height="3" fill="#c4d2de"/>
<rect x="531" y="401" width="1" height="3" fill="#c4d2de"/>
<rect x="556" y="401" width="1" height="3" fill="#c4d2de"/>
<rect x="580" y="401" width="1" height="3" fill="#c4d2de"/>
<rect x="605" y="401" width="1" height="3" fill="#c4d2de"/>
<rect x="630" y="401" width="1" height="3" fill="#c4d2de"/>
<rect x="654" y="401" width="1" height="3" fill="#c4d2de"/>
<rect x="679" y="401" width="1" height="3" fill="#c4d2de"/>
<rect x="703" y="401" width="1" height="3" fill="#c4d2de"/>
<rect x="752" y="401" width="1" height="3" fill="#c4d2de"/>
<rect x="777" y="401" width="1" height="3" fill="#c4d2de"/>
<rect x="802" y="401" width="1" height="3" fill="#c4d2de"/>
<rect x="826" y="401" width="1" height="3" fill="#c4d2de"/>
<rect x="851" y="401" width="1" height="3" fill="#c4d2de"/>
<rect x="876" y="401" width="1" height="3" fill="#c4d2de"/>
</g>
</svg>
<div class="lg" style="left:18.4px;top:38.7px;color:#1616f0">Exponential_Moving_Average <span style="color:#f41414">Exponential_Moving_Average</span></div>
<div style="position:absolute;left:16px;top:36px;width:31px;height:22px;background:#f1f1f1;border-top:5px solid #d9d9d9;box-sizing:border-box"></div>
<div style="position:absolute;left:20px;top:44px;width:10px;height:10px;border-radius:2px;background:linear-gradient(180deg,#f04848,#d82828);border:1px solid #b02020;box-sizing:border-box"></div>
<div style="position:absolute;left:33px;top:44px;width:10px;height:10px;border-radius:2px;background:linear-gradient(180deg,#2aa4e4,#1484c8);border:1px solid #1070a8;box-sizing:border-box"></div>
<div style="position:absolute;left:18px;top:275.6px;font-size:11px;line-height:12px;color:#14147a;transform:scaleX(0.9);transform-origin:0 0">MACD</div>
<div style="position:absolute;left:18px;top:326.6px;font-size:11px;line-height:12px;color:#f08c28;transform:scaleX(0.9);transform-origin:0 0">RSI</div>
<div class="ax" style="top:62px">110.00</div>
<div class="ax" style="top:142px">109.00</div>
<div class="ax" style="top:182px">108.50</div>
<div class="ax" style="top:222px">108.00</div>
<div class="ax" style="top:294px">+0.0</div>
<div class="ax" style="top:348px">60</div>
<div class="ax" style="top:376px">40</div>
<div style="position:absolute;left:900px;top:98px;width:48px;height:21px;background:#fff;color:#3c4148;font-size:11px;line-height:20px;text-align:center;text-indent:2px">109.46</div>
<div class="xl" style="left:23px">22</div>
<div class="xl" style="left:47px">23</div>
<div class="xl" style="left:72px">26</div>
<div class="xl" style="left:97px">27</div>
<div class="xl" style="left:121px">28</div>
<div class="xl" style="left:146px">29</div>
<div class="xl" style="left:170px">30</div>
<div class="xl" style="left:195px">3</div>
<div class="xl" style="left:220px">4</div>
<div class="xl" style="left:244px">5</div>
<div class="xl" style="left:269px">6</div>
<div class="xl" style="left:293px">7</div>
<div class="xl" style="left:318px">10</div>
<div class="xl" style="left:343px">11</div>
<div class="xl" style="left:367px">12</div>
<div class="xl" style="left:392px">13</div>
<div class="xl" style="left:417px">14</div>
<div class="xl" style="left:441px">17</div>
<div class="xl" style="left:466px">18</div>
<div class="xl" style="left:490px">19</div>
<div class="xl" style="left:515px">20</div>
<div class="xl" style="left:540px">21</div>
<div class="xl" style="left:564px">24</div>
<div class="xl" style="left:589px">25</div>
<div class="xl" style="left:614px">26</div>
<div class="xl" style="left:638px">27</div>
<div class="xl" style="left:663px">28</div>
<div class="xl" style="left:687px">31</div>
<div class="xl" style="left:712px">1</div>
<div class="xl" style="left:736px">2</div>
<div class="xl" style="left:761px">3</div>
<div class="xl" style="left:786px">4</div>
<div class="xl" style="left:810px">7</div>
<div class="xl" style="left:835px">8</div>
<div class="xl" style="left:860px">9</div>
<div class="mont" style="left:16px"></div>
<div class="mon" style="left:16px;width:60px">Апр 2021</div>
<div class="mont" style="left:211px"></div>
<div class="mon" style="left:211px;width:61px">Май 2021</div>
<div class="mont" style="left:728px"></div>
<div class="mon" style="left:728px;width:68px">Июнь 2021</div>
<div style="position:absolute;left:0;top:435px;width:2px;height:2px;background:#111"></div>
</div></body></html>
